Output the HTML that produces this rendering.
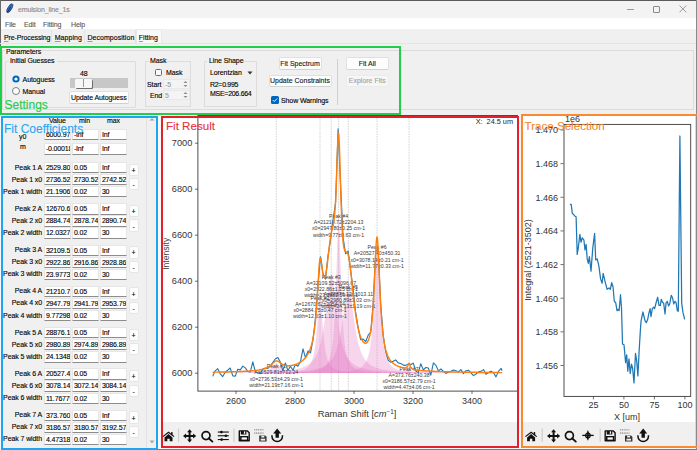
<!DOCTYPE html>
<html><head><meta charset="utf-8"><style>
html,body{margin:0;padding:0;width:697px;height:450px;overflow:hidden;background:#f0f0f0}
body{position:relative;font-family:"Liberation Sans", sans-serif}
svg text{font-family:"Liberation Sans", sans-serif}
u{text-decoration-color:#9a9a9a}
div{-webkit-text-stroke:0.12px currentColor}
</style></head><body>
<div style="position:absolute;left:0px;top:0px;width:697px;height:18px;background:#f3f3f3"></div><div style="position:absolute;left:0px;top:18px;width:697px;height:10.5px;background:#ffffff"></div><div style="position:absolute;left:0px;top:28.5px;width:697px;height:85.5px;background:#f0f0f0"></div><div style="position:absolute;left:0px;top:114px;width:697px;height:336px;background:#f0f0f0"></div><div style="position:absolute;left:0px;top:0px;width:697px;height:1px;background:#5a5a5a"></div><div style="position:absolute;left:0px;top:0px;width:1px;height:450px;background:#6a6a6a"></div><div style="position:absolute;left:0px;top:449px;width:697px;height:1px;background:#7a7a7a"></div><svg style="position:absolute;left:5px;top:3px" width="10" height="11" viewBox="0 0 10 11"><ellipse cx="4.8" cy="5.2" rx="1.9" ry="4.9" transform="rotate(30 4.8 5.2)" fill="#2f6bc0" stroke="#1a3a6e" stroke-width="0.7"/><path d="M2.2 9.8 L5.6 4" stroke="#0f2447" stroke-width="0.8"/></svg><div style="position:absolute;left:18px;top:5.8px;font-size:7px;line-height:7px;color:#8a8a8a;white-space:pre;letter-spacing:-0.1px;letter-spacing:-0.15px">emulsion_line_1s</div><div style="position:absolute;left:627px;top:8.5px;width:6.5px;height:1px;background:#9a9a9a"></div><div style="position:absolute;left:652.5px;top:5.5px;width:7px;height:7px;border:1px solid #8a8a8a;box-sizing:border-box;border-radius:1px"></div><svg style="position:absolute;left:679px;top:5.2px" width="8" height="8" viewBox="0 0 8 8"><path d="M0.5 0.5 L7.3 7.3 M7.3 0.5 L0.5 7.3" stroke="#8a8a8a" stroke-width="0.85"/></svg><div style="position:absolute;left:5px;top:20.5px;font-size:7px;line-height:7px;color:#5a5a5a;white-space:pre;letter-spacing:-0.1px;">File</div><div style="position:absolute;left:24px;top:20.5px;font-size:7px;line-height:7px;color:#5a5a5a;white-space:pre;letter-spacing:-0.1px;">Edit</div><div style="position:absolute;left:43px;top:20.5px;font-size:7px;line-height:7px;color:#5a5a5a;white-space:pre;letter-spacing:-0.1px;">Fitting</div><div style="position:absolute;left:71px;top:20.5px;font-size:7px;line-height:7px;color:#5a5a5a;white-space:pre;letter-spacing:-0.1px;">Help</div><div style="position:absolute;left:0px;top:42.5px;width:697px;height:1px;background:#e4e4e4"></div><div style="position:absolute;left:2px;top:29.5px;width:49.5px;height:13px;background:#f0f0f0;border-right:1px solid #e2e2e2;box-sizing:border-box"></div><div style="position:absolute;left:3.9px;top:34.4px;font-size:7px;line-height:7px;color:#000;white-space:pre;letter-spacing:-0.1px;letter-spacing:-0.1px"><u>P</u>re-Processing</div><div style="position:absolute;left:51.5px;top:29.5px;width:33.0px;height:13px;background:#f0f0f0;border-right:1px solid #e2e2e2;box-sizing:border-box"></div><div style="position:absolute;left:54.7px;top:34.4px;font-size:7px;line-height:7px;color:#000;white-space:pre;letter-spacing:-0.1px;letter-spacing:0.05px"><u>M</u>apping</div><div style="position:absolute;left:84.5px;top:29.5px;width:51.0px;height:13px;background:#f0f0f0;border-right:1px solid #e2e2e2;box-sizing:border-box"></div><div style="position:absolute;left:87.4px;top:34.4px;font-size:7px;line-height:7px;color:#000;white-space:pre;letter-spacing:-0.1px;letter-spacing:0.05px"><u>D</u>ecomposition</div><div style="position:absolute;left:135.5px;top:28.5px;width:26.5px;height:14.5px;background:#f9f9f9;border:1px solid #e8e8e8;border-bottom:none;box-sizing:border-box"></div><div style="position:absolute;left:138.8px;top:33.8px;font-size:7px;line-height:7px;color:#000;white-space:pre;letter-spacing:-0.1px;letter-spacing:0px"><u>F</u>itting</div><div style="position:absolute;left:2px;top:50px;width:692px;height:60px;border:1px solid #dcdcdc;box-sizing:border-box"></div><div style="position:absolute;left:5px;top:48px;width:36px;height:5px;background:#f0f0f0"></div><div style="position:absolute;left:6px;top:47.5px;font-size:7px;line-height:7px;color:#000;white-space:pre;letter-spacing:-0.1px;">Parameters</div><div style="position:absolute;left:5px;top:61px;width:131px;height:47px;border:1px solid #dcdcdc;box-sizing:border-box;border-radius:1px"></div><div style="position:absolute;left:9px;top:58px;width:48px;height:5px;background:#f0f0f0"></div><div style="position:absolute;left:10px;top:57px;font-size:7px;line-height:7px;color:#000;white-space:pre;letter-spacing:-0.1px;">Initial Guesses</div><svg style="position:absolute;left:11.3px;top:74px" width="10" height="22" viewBox="0 0 10 22"><circle cx="5" cy="5" r="3.6" fill="#0067c0"/><circle cx="5" cy="5" r="1.6" fill="#fff"/><circle cx="5" cy="17" r="3.5" fill="#fff" stroke="#5f5f5f" stroke-width="0.8"/></svg><div style="position:absolute;left:22.6px;top:75.5px;font-size:7px;line-height:7px;color:#000;white-space:pre;letter-spacing:-0.1px;">Autoguess</div><div style="position:absolute;left:22.6px;top:87.5px;font-size:7px;line-height:7px;color:#000;white-space:pre;letter-spacing:-0.1px;">Manual</div><div style="position:absolute;left:80px;top:69.5px;font-size:7px;line-height:7px;color:#000;white-space:pre;letter-spacing:-0.1px;">48</div><div style="position:absolute;left:70px;top:78px;width:58px;height:10px;background:#c7c7c7"></div><div style="position:absolute;left:75px;top:79px;width:17px;height:8.5px;background:#f7f7f7;box-shadow:1px 1px 0 #6e6e6e;border-radius:1px"></div><div style="position:absolute;left:83px;top:79px;width:1px;height:8px;background:#9a9a9a"></div><div style="position:absolute;left:69px;top:91px;width:60px;height:12.5px;background:#fdfdfd;border:1px solid #e0e0e0;box-sizing:border-box;border-radius:2px;border-bottom-color:#cfcfcf"></div><div style="position:absolute;left:71px;top:93.5px;font-size:7px;line-height:7px;color:#000;white-space:pre;letter-spacing:-0.1px;">Update Autoguess</div><div style="position:absolute;left:145px;top:61px;width:46px;height:46px;border:1px solid #dcdcdc;box-sizing:border-box"></div><div style="position:absolute;left:149px;top:58px;width:18px;height:5px;background:#f0f0f0"></div><div style="position:absolute;left:150px;top:57px;font-size:7px;line-height:7px;color:#000;white-space:pre;letter-spacing:-0.1px;">Mask</div><div style="position:absolute;left:154.5px;top:68.5px;width:7.5px;height:7.5px;border:1px solid #6a6a6a;box-sizing:border-box;border-radius:1.5px;background:#fafafa"></div><div style="position:absolute;left:166px;top:69px;font-size:7px;line-height:7px;color:#000;white-space:pre;letter-spacing:-0.1px;">Mask</div><div style="position:absolute;left:147px;top:80.5px;font-size:7px;line-height:7px;color:#000;white-space:pre;letter-spacing:-0.1px;">Start</div><div style="position:absolute;left:150px;top:91.5px;font-size:7px;line-height:7px;color:#000;white-space:pre;letter-spacing:-0.1px;">End</div><div style="position:absolute;left:163px;top:79px;width:27px;height:10px;background:#f4f4f4;border:1px solid #e8e8e8;box-sizing:border-box"></div><svg style="position:absolute;left:182px;top:80px" width="7" height="8" viewBox="0 0 7 8"><path d="M1.5 3 L3.5 1 L5.5 3 Z M1.5 5 L3.5 7 L5.5 5 Z" fill="#8a8a8a"/></svg><div style="position:absolute;left:163px;top:90px;width:27px;height:10px;background:#f4f4f4;border:1px solid #e8e8e8;box-sizing:border-box"></div><svg style="position:absolute;left:182px;top:91px" width="7" height="8" viewBox="0 0 7 8"><path d="M1.5 3 L3.5 1 L5.5 3 Z M1.5 5 L3.5 7 L5.5 5 Z" fill="#8a8a8a"/></svg><div style="position:absolute;left:165px;top:80.5px;font-size:7px;line-height:7px;color:#9a9a9a;white-space:pre;letter-spacing:-0.1px;">-5</div><div style="position:absolute;left:165px;top:91.5px;font-size:7px;line-height:7px;color:#9a9a9a;white-space:pre;letter-spacing:-0.1px;">5</div><div style="position:absolute;left:204px;top:61px;width:53px;height:46px;border:1px solid #dcdcdc;box-sizing:border-box"></div><div style="position:absolute;left:207px;top:58px;width:36px;height:5px;background:#f0f0f0"></div><div style="position:absolute;left:209px;top:57px;font-size:7px;line-height:7px;color:#000;white-space:pre;letter-spacing:-0.1px;">Line Shape</div><div style="position:absolute;left:210px;top:69px;font-size:7px;line-height:7px;color:#000;white-space:pre;letter-spacing:-0.1px;">Lorentzian</div><svg style="position:absolute;left:247px;top:71px" width="6" height="4" viewBox="0 0 6 4"><path d="M0.5 0.5 L5.5 0.5 L3 3.5 Z" fill="#333"/></svg><div style="position:absolute;left:210px;top:81px;font-size:7px;line-height:7px;color:#000;white-space:pre;letter-spacing:-0.1px;letter-spacing:-0.3px">R2=0.995</div><div style="position:absolute;left:210px;top:89.5px;font-size:7px;line-height:7px;color:#000;white-space:pre;letter-spacing:-0.1px;letter-spacing:-0.28px">MSE=206.664</div><div style="position:absolute;left:278.5px;top:56.5px;width:43px;height:13px;background:#fdfdfd;border:1px solid #e0e0e0;border-bottom-color:#d2d2d2;box-sizing:border-box;border-radius:2px"></div><div style="position:absolute;left:278.5px;top:56.5px;width:43px;height:13px;font-size:7px;line-height:13px;text-align:center;color:#1a1a1a;white-space:pre">Fit Spectrum</div><div style="position:absolute;left:268.5px;top:74.5px;width:63px;height:12.5px;background:#fdfdfd;border:1px solid #e0e0e0;border-bottom-color:#d2d2d2;box-sizing:border-box;border-radius:2px"></div><div style="position:absolute;left:268.5px;top:74.5px;width:63px;height:12.5px;font-size:7px;line-height:12.5px;text-align:center;color:#1a1a1a;white-space:pre">Update Constraints</div><div style="position:absolute;left:271px;top:96px;width:7.5px;height:7.5px;background:#0067c0;border-radius:1.5px"></div><svg style="position:absolute;left:271px;top:96px" width="8" height="8" viewBox="0 0 8 8"><path d="M1.8 4 L3.3 5.5 L6.2 2.5" stroke="#fff" stroke-width="0.9" fill="none"/></svg><div style="position:absolute;left:281px;top:96.5px;font-size:7px;line-height:7px;color:#000;white-space:pre;letter-spacing:-0.1px;">Show Warnings</div><div style="position:absolute;left:337px;top:59px;width:1px;height:46px;background:#cfcfcf"></div><div style="position:absolute;left:346px;top:56.5px;width:42.5px;height:13px;background:#fdfdfd;border:1px solid #e0e0e0;border-bottom-color:#d2d2d2;box-sizing:border-box;border-radius:2px"></div><div style="position:absolute;left:346px;top:56.5px;width:42.5px;height:13px;font-size:7px;line-height:13px;text-align:center;color:#1a1a1a;white-space:pre">Fit All</div><div style="position:absolute;left:346px;top:74.5px;width:42.5px;height:12.5px;background:#f6f6f6;border:1px solid #ececec;border-bottom-color:#ececec;box-sizing:border-box;border-radius:2px"></div><div style="position:absolute;left:346px;top:74.5px;width:42.5px;height:12.5px;font-size:7px;line-height:12.5px;text-align:center;color:#a3a3a3;white-space:pre">Explore Fits</div><div style="position:absolute;left:0px;top:115px;width:697px;height:335px;background:#f8f8f8"></div><div style="position:absolute;left:2px;top:118px;width:154px;height:331px;background:#f0f0f0"></div><div style="position:absolute;left:145.5px;top:117px;width:1px;height:333px;background:#e3e3e3"></div><svg style="position:absolute;left:147.5px;top:116.5px" width="8" height="6" viewBox="0 0 8 6"><path d="M1.5 3.6 L4 1.3 L6.5 3.6 Z" fill="#a0a0a0"/></svg><svg style="position:absolute;left:148px;top:439px" width="8" height="6" viewBox="0 0 8 6"><path d="M1.5 1.5 L4 4.5 L6.5 1.5 Z" fill="#a8a8a8"/></svg><div style="position:absolute;left:49px;top:117px;font-size:7px;line-height:7px;color:#000;white-space:pre;letter-spacing:-0.1px;">Value</div><div style="position:absolute;left:79px;top:117px;font-size:7px;line-height:7px;color:#000;white-space:pre;letter-spacing:-0.1px;">min</div><div style="position:absolute;left:107px;top:117px;font-size:7px;line-height:7px;color:#000;white-space:pre;letter-spacing:-0.1px;">max</div><div style="position:absolute;left:43.7px;top:128.7px;width:27.3px;height:11.3px;background:#fff;border:1px solid #e6e6e6;border-bottom:1px solid #8c8c8c;box-sizing:border-box;overflow:hidden;font-size:7px;line-height:10.3px;padding-left:1.2px;color:#000;white-space:pre;letter-spacing:-0.15px">6000.974</div><div style="position:absolute;left:71.7px;top:128.7px;width:27.3px;height:11.3px;background:#fff;border:1px solid #e6e6e6;border-bottom:1px solid #8c8c8c;box-sizing:border-box;overflow:hidden;font-size:7px;line-height:10.3px;padding-left:1.2px;color:#000;white-space:pre;letter-spacing:-0.15px">-Inf</div><div style="position:absolute;left:99.7px;top:128.7px;width:27.3px;height:11.3px;background:#fff;border:1px solid #e6e6e6;border-bottom:1px solid #8c8c8c;box-sizing:border-box;overflow:hidden;font-size:7px;line-height:10.3px;padding-left:1.2px;color:#000;white-space:pre;letter-spacing:-0.15px">Inf</div><div style="position:absolute;left:19px;top:133px;font-size:7px;line-height:7px;color:#000;white-space:pre;letter-spacing:-0.1px;">y0</div><div style="position:absolute;left:43.7px;top:143.3px;width:27.3px;height:11.3px;background:#fff;border:1px solid #e6e6e6;border-bottom:1px solid #8c8c8c;box-sizing:border-box;overflow:hidden;font-size:7px;line-height:10.3px;padding-left:1.2px;color:#000;white-space:pre;letter-spacing:-0.15px">-0.00018</div><div style="position:absolute;left:71.7px;top:143.3px;width:27.3px;height:11.3px;background:#fff;border:1px solid #e6e6e6;border-bottom:1px solid #8c8c8c;box-sizing:border-box;overflow:hidden;font-size:7px;line-height:10.3px;padding-left:1.2px;color:#000;white-space:pre;letter-spacing:-0.15px">-Inf</div><div style="position:absolute;left:99.7px;top:143.3px;width:27.3px;height:11.3px;background:#fff;border:1px solid #e6e6e6;border-bottom:1px solid #8c8c8c;box-sizing:border-box;overflow:hidden;font-size:7px;line-height:10.3px;padding-left:1.2px;color:#000;white-space:pre;letter-spacing:-0.15px">Inf</div><div style="position:absolute;left:20px;top:142.8px;font-size:7px;line-height:7px;color:#000;white-space:pre;letter-spacing:-0.1px;">m</div><div style="position:absolute;left:43.7px;top:162.0px;width:27.3px;height:11.3px;background:#fff;border:1px solid #e6e6e6;border-bottom:1px solid #8c8c8c;box-sizing:border-box;overflow:hidden;font-size:7px;line-height:10.3px;padding-left:1.2px;color:#000;white-space:pre;letter-spacing:-0.15px">2529.807</div><div style="position:absolute;left:71.7px;top:162.0px;width:27.3px;height:11.3px;background:#fff;border:1px solid #e6e6e6;border-bottom:1px solid #8c8c8c;box-sizing:border-box;overflow:hidden;font-size:7px;line-height:10.3px;padding-left:1.2px;color:#000;white-space:pre;letter-spacing:-0.15px">0.05</div><div style="position:absolute;left:99.7px;top:162.0px;width:27.3px;height:11.3px;background:#fff;border:1px solid #e6e6e6;border-bottom:1px solid #8c8c8c;box-sizing:border-box;overflow:hidden;font-size:7px;line-height:10.3px;padding-left:1.2px;color:#000;white-space:pre;letter-spacing:-0.15px">Inf</div><div style="position:absolute;left:0px;top:163.5px;width:42px;text-align:right;font-size:7px;line-height:7px;color:#000;letter-spacing:-0.1px;white-space:pre">Peak 1 A</div><div style="position:absolute;left:43.7px;top:174.1px;width:27.3px;height:11.3px;background:#fff;border:1px solid #e6e6e6;border-bottom:1px solid #8c8c8c;box-sizing:border-box;overflow:hidden;font-size:7px;line-height:10.3px;padding-left:1.2px;color:#000;white-space:pre;letter-spacing:-0.15px">2736.529</div><div style="position:absolute;left:71.7px;top:174.1px;width:27.3px;height:11.3px;background:#fff;border:1px solid #e6e6e6;border-bottom:1px solid #8c8c8c;box-sizing:border-box;overflow:hidden;font-size:7px;line-height:10.3px;padding-left:1.2px;color:#000;white-space:pre;letter-spacing:-0.15px">2730.529</div><div style="position:absolute;left:99.7px;top:174.1px;width:27.3px;height:11.3px;background:#fff;border:1px solid #e6e6e6;border-bottom:1px solid #8c8c8c;box-sizing:border-box;overflow:hidden;font-size:7px;line-height:10.3px;padding-left:1.2px;color:#000;white-space:pre;letter-spacing:-0.15px">2742.529</div><div style="position:absolute;left:0px;top:175.6px;width:42px;text-align:right;font-size:7px;line-height:7px;color:#000;letter-spacing:-0.1px;white-space:pre">Peak 1 x0</div><div style="position:absolute;left:43.7px;top:186.2px;width:27.3px;height:11.3px;background:#fff;border:1px solid #e6e6e6;border-bottom:1px solid #8c8c8c;box-sizing:border-box;overflow:hidden;font-size:7px;line-height:10.3px;padding-left:1.2px;color:#000;white-space:pre;letter-spacing:-0.15px">21.19065</div><div style="position:absolute;left:71.7px;top:186.2px;width:27.3px;height:11.3px;background:#fff;border:1px solid #e6e6e6;border-bottom:1px solid #8c8c8c;box-sizing:border-box;overflow:hidden;font-size:7px;line-height:10.3px;padding-left:1.2px;color:#000;white-space:pre;letter-spacing:-0.15px">0.02</div><div style="position:absolute;left:99.7px;top:186.2px;width:27.3px;height:11.3px;background:#fff;border:1px solid #e6e6e6;border-bottom:1px solid #8c8c8c;box-sizing:border-box;overflow:hidden;font-size:7px;line-height:10.3px;padding-left:1.2px;color:#000;white-space:pre;letter-spacing:-0.15px">30</div><div style="position:absolute;left:0px;top:187.7px;width:42px;text-align:right;font-size:7px;line-height:7px;color:#000;letter-spacing:-0.1px;white-space:pre">Peak 1 width</div><div style="position:absolute;left:128.8px;top:163.6px;width:10.2px;height:12.4px;background:#fdfdfd;border:1px solid #e6e6e6;box-sizing:border-box;border-radius:2px"></div><div style="position:absolute;left:131.5px;top:166.9px;font-size:7px;line-height:7px;color:#000;white-space:pre;letter-spacing:-0.1px;">+</div><div style="position:absolute;left:128.8px;top:178.2px;width:10.2px;height:12.2px;background:#fdfdfd;border:1px solid #e6e6e6;box-sizing:border-box;border-radius:2px"></div><div style="position:absolute;left:132.5px;top:181.3px;font-size:7px;line-height:7px;color:#000;white-space:pre;letter-spacing:-0.1px;">-</div><div style="position:absolute;left:43.7px;top:203.27px;width:27.3px;height:11.3px;background:#fff;border:1px solid #e6e6e6;border-bottom:1px solid #8c8c8c;box-sizing:border-box;overflow:hidden;font-size:7px;line-height:10.3px;padding-left:1.2px;color:#000;white-space:pre;letter-spacing:-0.15px">12670.61</div><div style="position:absolute;left:71.7px;top:203.27px;width:27.3px;height:11.3px;background:#fff;border:1px solid #e6e6e6;border-bottom:1px solid #8c8c8c;box-sizing:border-box;overflow:hidden;font-size:7px;line-height:10.3px;padding-left:1.2px;color:#000;white-space:pre;letter-spacing:-0.15px">0.05</div><div style="position:absolute;left:99.7px;top:203.27px;width:27.3px;height:11.3px;background:#fff;border:1px solid #e6e6e6;border-bottom:1px solid #8c8c8c;box-sizing:border-box;overflow:hidden;font-size:7px;line-height:10.3px;padding-left:1.2px;color:#000;white-space:pre;letter-spacing:-0.15px">Inf</div><div style="position:absolute;left:0px;top:204.77px;width:42px;text-align:right;font-size:7px;line-height:7px;color:#000;letter-spacing:-0.1px;white-space:pre">Peak 2 A</div><div style="position:absolute;left:43.7px;top:215.37px;width:27.3px;height:11.3px;background:#fff;border:1px solid #e6e6e6;border-bottom:1px solid #8c8c8c;box-sizing:border-box;overflow:hidden;font-size:7px;line-height:10.3px;padding-left:1.2px;color:#000;white-space:pre;letter-spacing:-0.15px">2884.745</div><div style="position:absolute;left:71.7px;top:215.37px;width:27.3px;height:11.3px;background:#fff;border:1px solid #e6e6e6;border-bottom:1px solid #8c8c8c;box-sizing:border-box;overflow:hidden;font-size:7px;line-height:10.3px;padding-left:1.2px;color:#000;white-space:pre;letter-spacing:-0.15px">2878.745</div><div style="position:absolute;left:99.7px;top:215.37px;width:27.3px;height:11.3px;background:#fff;border:1px solid #e6e6e6;border-bottom:1px solid #8c8c8c;box-sizing:border-box;overflow:hidden;font-size:7px;line-height:10.3px;padding-left:1.2px;color:#000;white-space:pre;letter-spacing:-0.15px">2890.745</div><div style="position:absolute;left:0px;top:216.87px;width:42px;text-align:right;font-size:7px;line-height:7px;color:#000;letter-spacing:-0.1px;white-space:pre">Peak 2 x0</div><div style="position:absolute;left:43.7px;top:227.47px;width:27.3px;height:11.3px;background:#fff;border:1px solid #e6e6e6;border-bottom:1px solid #8c8c8c;box-sizing:border-box;overflow:hidden;font-size:7px;line-height:10.3px;padding-left:1.2px;color:#000;white-space:pre;letter-spacing:-0.15px">12.03274</div><div style="position:absolute;left:71.7px;top:227.47px;width:27.3px;height:11.3px;background:#fff;border:1px solid #e6e6e6;border-bottom:1px solid #8c8c8c;box-sizing:border-box;overflow:hidden;font-size:7px;line-height:10.3px;padding-left:1.2px;color:#000;white-space:pre;letter-spacing:-0.15px">0.02</div><div style="position:absolute;left:99.7px;top:227.47px;width:27.3px;height:11.3px;background:#fff;border:1px solid #e6e6e6;border-bottom:1px solid #8c8c8c;box-sizing:border-box;overflow:hidden;font-size:7px;line-height:10.3px;padding-left:1.2px;color:#000;white-space:pre;letter-spacing:-0.15px">30</div><div style="position:absolute;left:0px;top:228.97px;width:42px;text-align:right;font-size:7px;line-height:7px;color:#000;letter-spacing:-0.1px;white-space:pre">Peak 2 width</div><div style="position:absolute;left:128.8px;top:204.87px;width:10.2px;height:12.4px;background:#fdfdfd;border:1px solid #e6e6e6;box-sizing:border-box;border-radius:2px"></div><div style="position:absolute;left:131.5px;top:208.17000000000002px;font-size:7px;line-height:7px;color:#000;white-space:pre;letter-spacing:-0.1px;">+</div><div style="position:absolute;left:128.8px;top:219.47px;width:10.2px;height:12.2px;background:#fdfdfd;border:1px solid #e6e6e6;box-sizing:border-box;border-radius:2px"></div><div style="position:absolute;left:132.5px;top:222.57000000000002px;font-size:7px;line-height:7px;color:#000;white-space:pre;letter-spacing:-0.1px;">-</div><div style="position:absolute;left:43.7px;top:244.54000000000002px;width:27.3px;height:11.3px;background:#fff;border:1px solid #e6e6e6;border-bottom:1px solid #8c8c8c;box-sizing:border-box;overflow:hidden;font-size:7px;line-height:10.3px;padding-left:1.2px;color:#000;white-space:pre;letter-spacing:-0.15px">32109.52</div><div style="position:absolute;left:71.7px;top:244.54000000000002px;width:27.3px;height:11.3px;background:#fff;border:1px solid #e6e6e6;border-bottom:1px solid #8c8c8c;box-sizing:border-box;overflow:hidden;font-size:7px;line-height:10.3px;padding-left:1.2px;color:#000;white-space:pre;letter-spacing:-0.15px">0.05</div><div style="position:absolute;left:99.7px;top:244.54000000000002px;width:27.3px;height:11.3px;background:#fff;border:1px solid #e6e6e6;border-bottom:1px solid #8c8c8c;box-sizing:border-box;overflow:hidden;font-size:7px;line-height:10.3px;padding-left:1.2px;color:#000;white-space:pre;letter-spacing:-0.15px">Inf</div><div style="position:absolute;left:0px;top:246.04000000000002px;width:42px;text-align:right;font-size:7px;line-height:7px;color:#000;letter-spacing:-0.1px;white-space:pre">Peak 3 A</div><div style="position:absolute;left:43.7px;top:256.64000000000004px;width:27.3px;height:11.3px;background:#fff;border:1px solid #e6e6e6;border-bottom:1px solid #8c8c8c;box-sizing:border-box;overflow:hidden;font-size:7px;line-height:10.3px;padding-left:1.2px;color:#000;white-space:pre;letter-spacing:-0.15px">2922.861</div><div style="position:absolute;left:71.7px;top:256.64000000000004px;width:27.3px;height:11.3px;background:#fff;border:1px solid #e6e6e6;border-bottom:1px solid #8c8c8c;box-sizing:border-box;overflow:hidden;font-size:7px;line-height:10.3px;padding-left:1.2px;color:#000;white-space:pre;letter-spacing:-0.15px">2916.861</div><div style="position:absolute;left:99.7px;top:256.64000000000004px;width:27.3px;height:11.3px;background:#fff;border:1px solid #e6e6e6;border-bottom:1px solid #8c8c8c;box-sizing:border-box;overflow:hidden;font-size:7px;line-height:10.3px;padding-left:1.2px;color:#000;white-space:pre;letter-spacing:-0.15px">2928.861</div><div style="position:absolute;left:0px;top:258.14000000000004px;width:42px;text-align:right;font-size:7px;line-height:7px;color:#000;letter-spacing:-0.1px;white-space:pre">Peak 3 x0</div><div style="position:absolute;left:43.7px;top:268.74px;width:27.3px;height:11.3px;background:#fff;border:1px solid #e6e6e6;border-bottom:1px solid #8c8c8c;box-sizing:border-box;overflow:hidden;font-size:7px;line-height:10.3px;padding-left:1.2px;color:#000;white-space:pre;letter-spacing:-0.15px">23.97738</div><div style="position:absolute;left:71.7px;top:268.74px;width:27.3px;height:11.3px;background:#fff;border:1px solid #e6e6e6;border-bottom:1px solid #8c8c8c;box-sizing:border-box;overflow:hidden;font-size:7px;line-height:10.3px;padding-left:1.2px;color:#000;white-space:pre;letter-spacing:-0.15px">0.02</div><div style="position:absolute;left:99.7px;top:268.74px;width:27.3px;height:11.3px;background:#fff;border:1px solid #e6e6e6;border-bottom:1px solid #8c8c8c;box-sizing:border-box;overflow:hidden;font-size:7px;line-height:10.3px;padding-left:1.2px;color:#000;white-space:pre;letter-spacing:-0.15px">30</div><div style="position:absolute;left:0px;top:270.24px;width:42px;text-align:right;font-size:7px;line-height:7px;color:#000;letter-spacing:-0.1px;white-space:pre">Peak 3 width</div><div style="position:absolute;left:128.8px;top:246.14000000000001px;width:10.2px;height:12.4px;background:#fdfdfd;border:1px solid #e6e6e6;box-sizing:border-box;border-radius:2px"></div><div style="position:absolute;left:131.5px;top:249.44000000000003px;font-size:7px;line-height:7px;color:#000;white-space:pre;letter-spacing:-0.1px;">+</div><div style="position:absolute;left:128.8px;top:260.74px;width:10.2px;height:12.2px;background:#fdfdfd;border:1px solid #e6e6e6;box-sizing:border-box;border-radius:2px"></div><div style="position:absolute;left:132.5px;top:263.84000000000003px;font-size:7px;line-height:7px;color:#000;white-space:pre;letter-spacing:-0.1px;">-</div><div style="position:absolute;left:43.7px;top:285.81px;width:27.3px;height:11.3px;background:#fff;border:1px solid #e6e6e6;border-bottom:1px solid #8c8c8c;box-sizing:border-box;overflow:hidden;font-size:7px;line-height:10.3px;padding-left:1.2px;color:#000;white-space:pre;letter-spacing:-0.15px">21210.72</div><div style="position:absolute;left:71.7px;top:285.81px;width:27.3px;height:11.3px;background:#fff;border:1px solid #e6e6e6;border-bottom:1px solid #8c8c8c;box-sizing:border-box;overflow:hidden;font-size:7px;line-height:10.3px;padding-left:1.2px;color:#000;white-space:pre;letter-spacing:-0.15px">0.05</div><div style="position:absolute;left:99.7px;top:285.81px;width:27.3px;height:11.3px;background:#fff;border:1px solid #e6e6e6;border-bottom:1px solid #8c8c8c;box-sizing:border-box;overflow:hidden;font-size:7px;line-height:10.3px;padding-left:1.2px;color:#000;white-space:pre;letter-spacing:-0.15px">Inf</div><div style="position:absolute;left:0px;top:287.31px;width:42px;text-align:right;font-size:7px;line-height:7px;color:#000;letter-spacing:-0.1px;white-space:pre">Peak 4 A</div><div style="position:absolute;left:43.7px;top:297.91px;width:27.3px;height:11.3px;background:#fff;border:1px solid #e6e6e6;border-bottom:1px solid #8c8c8c;box-sizing:border-box;overflow:hidden;font-size:7px;line-height:10.3px;padding-left:1.2px;color:#000;white-space:pre;letter-spacing:-0.15px">2947.798</div><div style="position:absolute;left:71.7px;top:297.91px;width:27.3px;height:11.3px;background:#fff;border:1px solid #e6e6e6;border-bottom:1px solid #8c8c8c;box-sizing:border-box;overflow:hidden;font-size:7px;line-height:10.3px;padding-left:1.2px;color:#000;white-space:pre;letter-spacing:-0.15px">2941.798</div><div style="position:absolute;left:99.7px;top:297.91px;width:27.3px;height:11.3px;background:#fff;border:1px solid #e6e6e6;border-bottom:1px solid #8c8c8c;box-sizing:border-box;overflow:hidden;font-size:7px;line-height:10.3px;padding-left:1.2px;color:#000;white-space:pre;letter-spacing:-0.15px">2953.798</div><div style="position:absolute;left:0px;top:299.41px;width:42px;text-align:right;font-size:7px;line-height:7px;color:#000;letter-spacing:-0.1px;white-space:pre">Peak 4 x0</div><div style="position:absolute;left:43.7px;top:310.01px;width:27.3px;height:11.3px;background:#fff;border:1px solid #e6e6e6;border-bottom:1px solid #8c8c8c;box-sizing:border-box;overflow:hidden;font-size:7px;line-height:10.3px;padding-left:1.2px;color:#000;white-space:pre;letter-spacing:-0.15px">9.772988</div><div style="position:absolute;left:71.7px;top:310.01px;width:27.3px;height:11.3px;background:#fff;border:1px solid #e6e6e6;border-bottom:1px solid #8c8c8c;box-sizing:border-box;overflow:hidden;font-size:7px;line-height:10.3px;padding-left:1.2px;color:#000;white-space:pre;letter-spacing:-0.15px">0.02</div><div style="position:absolute;left:99.7px;top:310.01px;width:27.3px;height:11.3px;background:#fff;border:1px solid #e6e6e6;border-bottom:1px solid #8c8c8c;box-sizing:border-box;overflow:hidden;font-size:7px;line-height:10.3px;padding-left:1.2px;color:#000;white-space:pre;letter-spacing:-0.15px">30</div><div style="position:absolute;left:0px;top:311.51px;width:42px;text-align:right;font-size:7px;line-height:7px;color:#000;letter-spacing:-0.1px;white-space:pre">Peak 4 width</div><div style="position:absolute;left:128.8px;top:287.41px;width:10.2px;height:12.4px;background:#fdfdfd;border:1px solid #e6e6e6;box-sizing:border-box;border-radius:2px"></div><div style="position:absolute;left:131.5px;top:290.71px;font-size:7px;line-height:7px;color:#000;white-space:pre;letter-spacing:-0.1px;">+</div><div style="position:absolute;left:128.8px;top:302.01px;width:10.2px;height:12.2px;background:#fdfdfd;border:1px solid #e6e6e6;box-sizing:border-box;border-radius:2px"></div><div style="position:absolute;left:132.5px;top:305.11px;font-size:7px;line-height:7px;color:#000;white-space:pre;letter-spacing:-0.1px;">-</div><div style="position:absolute;left:43.7px;top:327.08000000000004px;width:27.3px;height:11.3px;background:#fff;border:1px solid #e6e6e6;border-bottom:1px solid #8c8c8c;box-sizing:border-box;overflow:hidden;font-size:7px;line-height:10.3px;padding-left:1.2px;color:#000;white-space:pre;letter-spacing:-0.15px">28876.11</div><div style="position:absolute;left:71.7px;top:327.08000000000004px;width:27.3px;height:11.3px;background:#fff;border:1px solid #e6e6e6;border-bottom:1px solid #8c8c8c;box-sizing:border-box;overflow:hidden;font-size:7px;line-height:10.3px;padding-left:1.2px;color:#000;white-space:pre;letter-spacing:-0.15px">0.05</div><div style="position:absolute;left:99.7px;top:327.08000000000004px;width:27.3px;height:11.3px;background:#fff;border:1px solid #e6e6e6;border-bottom:1px solid #8c8c8c;box-sizing:border-box;overflow:hidden;font-size:7px;line-height:10.3px;padding-left:1.2px;color:#000;white-space:pre;letter-spacing:-0.15px">Inf</div><div style="position:absolute;left:0px;top:328.58000000000004px;width:42px;text-align:right;font-size:7px;line-height:7px;color:#000;letter-spacing:-0.1px;white-space:pre">Peak 5 A</div><div style="position:absolute;left:43.7px;top:339.18000000000006px;width:27.3px;height:11.3px;background:#fff;border:1px solid #e6e6e6;border-bottom:1px solid #8c8c8c;box-sizing:border-box;overflow:hidden;font-size:7px;line-height:10.3px;padding-left:1.2px;color:#000;white-space:pre;letter-spacing:-0.15px">2980.891</div><div style="position:absolute;left:71.7px;top:339.18000000000006px;width:27.3px;height:11.3px;background:#fff;border:1px solid #e6e6e6;border-bottom:1px solid #8c8c8c;box-sizing:border-box;overflow:hidden;font-size:7px;line-height:10.3px;padding-left:1.2px;color:#000;white-space:pre;letter-spacing:-0.15px">2974.891</div><div style="position:absolute;left:99.7px;top:339.18000000000006px;width:27.3px;height:11.3px;background:#fff;border:1px solid #e6e6e6;border-bottom:1px solid #8c8c8c;box-sizing:border-box;overflow:hidden;font-size:7px;line-height:10.3px;padding-left:1.2px;color:#000;white-space:pre;letter-spacing:-0.15px">2986.891</div><div style="position:absolute;left:0px;top:340.68000000000006px;width:42px;text-align:right;font-size:7px;line-height:7px;color:#000;letter-spacing:-0.1px;white-space:pre">Peak 5 x0</div><div style="position:absolute;left:43.7px;top:351.28000000000003px;width:27.3px;height:11.3px;background:#fff;border:1px solid #e6e6e6;border-bottom:1px solid #8c8c8c;box-sizing:border-box;overflow:hidden;font-size:7px;line-height:10.3px;padding-left:1.2px;color:#000;white-space:pre;letter-spacing:-0.15px">24.13481</div><div style="position:absolute;left:71.7px;top:351.28000000000003px;width:27.3px;height:11.3px;background:#fff;border:1px solid #e6e6e6;border-bottom:1px solid #8c8c8c;box-sizing:border-box;overflow:hidden;font-size:7px;line-height:10.3px;padding-left:1.2px;color:#000;white-space:pre;letter-spacing:-0.15px">0.02</div><div style="position:absolute;left:99.7px;top:351.28000000000003px;width:27.3px;height:11.3px;background:#fff;border:1px solid #e6e6e6;border-bottom:1px solid #8c8c8c;box-sizing:border-box;overflow:hidden;font-size:7px;line-height:10.3px;padding-left:1.2px;color:#000;white-space:pre;letter-spacing:-0.15px">30</div><div style="position:absolute;left:0px;top:352.78000000000003px;width:42px;text-align:right;font-size:7px;line-height:7px;color:#000;letter-spacing:-0.1px;white-space:pre">Peak 5 width</div><div style="position:absolute;left:128.8px;top:328.68000000000006px;width:10.2px;height:12.4px;background:#fdfdfd;border:1px solid #e6e6e6;box-sizing:border-box;border-radius:2px"></div><div style="position:absolute;left:131.5px;top:331.98px;font-size:7px;line-height:7px;color:#000;white-space:pre;letter-spacing:-0.1px;">+</div><div style="position:absolute;left:128.8px;top:343.28000000000003px;width:10.2px;height:12.2px;background:#fdfdfd;border:1px solid #e6e6e6;box-sizing:border-box;border-radius:2px"></div><div style="position:absolute;left:132.5px;top:346.38000000000005px;font-size:7px;line-height:7px;color:#000;white-space:pre;letter-spacing:-0.1px;">-</div><div style="position:absolute;left:43.7px;top:368.35px;width:27.3px;height:11.3px;background:#fff;border:1px solid #e6e6e6;border-bottom:1px solid #8c8c8c;box-sizing:border-box;overflow:hidden;font-size:7px;line-height:10.3px;padding-left:1.2px;color:#000;white-space:pre;letter-spacing:-0.15px">20527.40</div><div style="position:absolute;left:71.7px;top:368.35px;width:27.3px;height:11.3px;background:#fff;border:1px solid #e6e6e6;border-bottom:1px solid #8c8c8c;box-sizing:border-box;overflow:hidden;font-size:7px;line-height:10.3px;padding-left:1.2px;color:#000;white-space:pre;letter-spacing:-0.15px">0.05</div><div style="position:absolute;left:99.7px;top:368.35px;width:27.3px;height:11.3px;background:#fff;border:1px solid #e6e6e6;border-bottom:1px solid #8c8c8c;box-sizing:border-box;overflow:hidden;font-size:7px;line-height:10.3px;padding-left:1.2px;color:#000;white-space:pre;letter-spacing:-0.15px">Inf</div><div style="position:absolute;left:0px;top:369.85px;width:42px;text-align:right;font-size:7px;line-height:7px;color:#000;letter-spacing:-0.1px;white-space:pre">Peak 6 A</div><div style="position:absolute;left:43.7px;top:380.45000000000005px;width:27.3px;height:11.3px;background:#fff;border:1px solid #e6e6e6;border-bottom:1px solid #8c8c8c;box-sizing:border-box;overflow:hidden;font-size:7px;line-height:10.3px;padding-left:1.2px;color:#000;white-space:pre;letter-spacing:-0.15px">3078.141</div><div style="position:absolute;left:71.7px;top:380.45000000000005px;width:27.3px;height:11.3px;background:#fff;border:1px solid #e6e6e6;border-bottom:1px solid #8c8c8c;box-sizing:border-box;overflow:hidden;font-size:7px;line-height:10.3px;padding-left:1.2px;color:#000;white-space:pre;letter-spacing:-0.15px">3072.141</div><div style="position:absolute;left:99.7px;top:380.45000000000005px;width:27.3px;height:11.3px;background:#fff;border:1px solid #e6e6e6;border-bottom:1px solid #8c8c8c;box-sizing:border-box;overflow:hidden;font-size:7px;line-height:10.3px;padding-left:1.2px;color:#000;white-space:pre;letter-spacing:-0.15px">3084.141</div><div style="position:absolute;left:0px;top:381.95000000000005px;width:42px;text-align:right;font-size:7px;line-height:7px;color:#000;letter-spacing:-0.1px;white-space:pre">Peak 6 x0</div><div style="position:absolute;left:43.7px;top:392.55px;width:27.3px;height:11.3px;background:#fff;border:1px solid #e6e6e6;border-bottom:1px solid #8c8c8c;box-sizing:border-box;overflow:hidden;font-size:7px;line-height:10.3px;padding-left:1.2px;color:#000;white-space:pre;letter-spacing:-0.15px">11.76779</div><div style="position:absolute;left:71.7px;top:392.55px;width:27.3px;height:11.3px;background:#fff;border:1px solid #e6e6e6;border-bottom:1px solid #8c8c8c;box-sizing:border-box;overflow:hidden;font-size:7px;line-height:10.3px;padding-left:1.2px;color:#000;white-space:pre;letter-spacing:-0.15px">0.02</div><div style="position:absolute;left:99.7px;top:392.55px;width:27.3px;height:11.3px;background:#fff;border:1px solid #e6e6e6;border-bottom:1px solid #8c8c8c;box-sizing:border-box;overflow:hidden;font-size:7px;line-height:10.3px;padding-left:1.2px;color:#000;white-space:pre;letter-spacing:-0.15px">30</div><div style="position:absolute;left:0px;top:394.05px;width:42px;text-align:right;font-size:7px;line-height:7px;color:#000;letter-spacing:-0.1px;white-space:pre">Peak 6 width</div><div style="position:absolute;left:128.8px;top:369.95000000000005px;width:10.2px;height:12.4px;background:#fdfdfd;border:1px solid #e6e6e6;box-sizing:border-box;border-radius:2px"></div><div style="position:absolute;left:131.5px;top:373.25px;font-size:7px;line-height:7px;color:#000;white-space:pre;letter-spacing:-0.1px;">+</div><div style="position:absolute;left:128.8px;top:384.55px;width:10.2px;height:12.2px;background:#fdfdfd;border:1px solid #e6e6e6;box-sizing:border-box;border-radius:2px"></div><div style="position:absolute;left:132.5px;top:387.65000000000003px;font-size:7px;line-height:7px;color:#000;white-space:pre;letter-spacing:-0.1px;">-</div><div style="position:absolute;left:43.7px;top:409.62px;width:27.3px;height:11.3px;background:#fff;border:1px solid #e6e6e6;border-bottom:1px solid #8c8c8c;box-sizing:border-box;overflow:hidden;font-size:7px;line-height:10.3px;padding-left:1.2px;color:#000;white-space:pre;letter-spacing:-0.15px">373.7601</div><div style="position:absolute;left:71.7px;top:409.62px;width:27.3px;height:11.3px;background:#fff;border:1px solid #e6e6e6;border-bottom:1px solid #8c8c8c;box-sizing:border-box;overflow:hidden;font-size:7px;line-height:10.3px;padding-left:1.2px;color:#000;white-space:pre;letter-spacing:-0.15px">0.05</div><div style="position:absolute;left:99.7px;top:409.62px;width:27.3px;height:11.3px;background:#fff;border:1px solid #e6e6e6;border-bottom:1px solid #8c8c8c;box-sizing:border-box;overflow:hidden;font-size:7px;line-height:10.3px;padding-left:1.2px;color:#000;white-space:pre;letter-spacing:-0.15px">Inf</div><div style="position:absolute;left:0px;top:411.12px;width:42px;text-align:right;font-size:7px;line-height:7px;color:#000;letter-spacing:-0.1px;white-space:pre">Peak 7 A</div><div style="position:absolute;left:43.7px;top:421.72px;width:27.3px;height:11.3px;background:#fff;border:1px solid #e6e6e6;border-bottom:1px solid #8c8c8c;box-sizing:border-box;overflow:hidden;font-size:7px;line-height:10.3px;padding-left:1.2px;color:#000;white-space:pre;letter-spacing:-0.15px">3186.572</div><div style="position:absolute;left:71.7px;top:421.72px;width:27.3px;height:11.3px;background:#fff;border:1px solid #e6e6e6;border-bottom:1px solid #8c8c8c;box-sizing:border-box;overflow:hidden;font-size:7px;line-height:10.3px;padding-left:1.2px;color:#000;white-space:pre;letter-spacing:-0.15px">3180.572</div><div style="position:absolute;left:99.7px;top:421.72px;width:27.3px;height:11.3px;background:#fff;border:1px solid #e6e6e6;border-bottom:1px solid #8c8c8c;box-sizing:border-box;overflow:hidden;font-size:7px;line-height:10.3px;padding-left:1.2px;color:#000;white-space:pre;letter-spacing:-0.15px">3192.572</div><div style="position:absolute;left:0px;top:423.22px;width:42px;text-align:right;font-size:7px;line-height:7px;color:#000;letter-spacing:-0.1px;white-space:pre">Peak 7 x0</div><div style="position:absolute;left:43.7px;top:433.82px;width:27.3px;height:11.3px;background:#fff;border:1px solid #e6e6e6;border-bottom:1px solid #8c8c8c;box-sizing:border-box;overflow:hidden;font-size:7px;line-height:10.3px;padding-left:1.2px;color:#000;white-space:pre;letter-spacing:-0.15px">4.473181</div><div style="position:absolute;left:71.7px;top:433.82px;width:27.3px;height:11.3px;background:#fff;border:1px solid #e6e6e6;border-bottom:1px solid #8c8c8c;box-sizing:border-box;overflow:hidden;font-size:7px;line-height:10.3px;padding-left:1.2px;color:#000;white-space:pre;letter-spacing:-0.15px">0.02</div><div style="position:absolute;left:99.7px;top:433.82px;width:27.3px;height:11.3px;background:#fff;border:1px solid #e6e6e6;border-bottom:1px solid #8c8c8c;box-sizing:border-box;overflow:hidden;font-size:7px;line-height:10.3px;padding-left:1.2px;color:#000;white-space:pre;letter-spacing:-0.15px">30</div><div style="position:absolute;left:0px;top:435.32px;width:42px;text-align:right;font-size:7px;line-height:7px;color:#000;letter-spacing:-0.1px;white-space:pre">Peak 7 width</div><div style="position:absolute;left:128.8px;top:411.22px;width:10.2px;height:12.4px;background:#fdfdfd;border:1px solid #e6e6e6;box-sizing:border-box;border-radius:2px"></div><div style="position:absolute;left:131.5px;top:414.52px;font-size:7px;line-height:7px;color:#000;white-space:pre;letter-spacing:-0.1px;">+</div><div style="position:absolute;left:128.8px;top:425.82px;width:10.2px;height:12.2px;background:#fdfdfd;border:1px solid #e6e6e6;box-sizing:border-box;border-radius:2px"></div><div style="position:absolute;left:132.5px;top:428.92px;font-size:7px;line-height:7px;color:#000;white-space:pre;letter-spacing:-0.1px;">-</div><div style="position:absolute;left:163px;top:118px;width:354px;height:304px;background:#ffffff"></div><div style="position:absolute;left:163px;top:422px;width:354px;height:24px;background:#f0f0f0"></div><svg style="position:absolute;left:0;top:0" width="697" height="450" viewBox="0 0 697 450"><defs><clipPath id="ax"><rect x="198" y="115.3" width="319" height="275.7"/></clipPath></defs><g clip-path="url(#ax)"><line x1="276.28" y1="115.3" x2="276.28" y2="391" stroke="#b8b8b8" stroke-width="0.6" stroke-dasharray="1.6 1"/><line x1="320.00" y1="115.3" x2="320.00" y2="391" stroke="#b8b8b8" stroke-width="0.6" stroke-dasharray="1.6 1"/><line x1="331.24" y1="115.3" x2="331.24" y2="391" stroke="#b8b8b8" stroke-width="0.6" stroke-dasharray="1.6 1"/><line x1="338.60" y1="115.3" x2="338.60" y2="391" stroke="#b8b8b8" stroke-width="0.6" stroke-dasharray="1.6 1"/><line x1="348.36" y1="115.3" x2="348.36" y2="391" stroke="#b8b8b8" stroke-width="0.6" stroke-dasharray="1.6 1"/><line x1="377.05" y1="115.3" x2="377.05" y2="391" stroke="#b8b8b8" stroke-width="0.6" stroke-dasharray="1.6 1"/><line x1="409.04" y1="115.3" x2="409.04" y2="391" stroke="#b8b8b8" stroke-width="0.6" stroke-dasharray="1.6 1"/><polygon points="212.7,373.0 213.3,373.0 213.9,373.0 214.5,373.0 215.1,373.0 215.6,373.0 216.2,373.0 216.8,373.0 217.4,373.0 218.0,373.0 218.6,373.0 219.2,373.0 219.8,373.0 220.4,373.0 221.0,373.0 221.5,373.0 222.1,373.0 222.7,373.0 223.3,373.0 223.9,373.0 224.5,373.0 225.1,373.0 225.7,373.0 226.3,372.9 226.9,372.9 227.4,372.9 228.0,372.9 228.6,372.9 229.2,372.9 229.8,372.9 230.4,372.9 231.0,372.9 231.6,372.9 232.2,372.9 232.8,372.9 233.3,372.9 233.9,372.9 234.5,372.9 235.1,372.9 235.7,372.9 236.3,372.9 236.9,372.9 237.5,372.9 238.1,372.9 238.7,372.8 239.2,372.8 239.8,372.8 240.4,372.8 241.0,372.8 241.6,372.8 242.2,372.8 242.8,372.8 243.4,372.8 244.0,372.8 244.6,372.8 245.1,372.7 245.7,372.7 246.3,372.7 246.9,372.7 247.5,372.7 248.1,372.7 248.7,372.7 249.3,372.6 249.9,372.6 250.5,372.6 251.0,372.6 251.6,372.6 252.2,372.5 252.8,372.5 253.4,372.5 254.0,372.4 254.6,372.4 255.2,372.4 255.8,372.3 256.4,372.3 256.9,372.3 257.5,372.2 258.1,372.2 258.7,372.1 259.3,372.0 259.9,372.0 260.5,371.9 261.1,371.8 261.7,371.7 262.3,371.6 262.8,371.5 263.4,371.4 264.0,371.3 264.6,371.1 265.2,371.0 265.8,370.8 266.4,370.6 267.0,370.4 267.6,370.1 268.2,369.8 268.7,369.5 269.3,369.2 269.9,368.8 270.5,368.4 271.1,367.9 271.7,367.4 272.3,366.9 272.9,366.3 273.5,365.8 274.1,365.3 274.6,364.9 275.2,364.6 275.8,364.4 276.4,364.4 277.0,364.5 277.6,364.7 278.2,365.1 278.8,365.6 279.4,366.1 280.0,366.6 280.5,367.1 281.1,367.6 281.7,368.1 282.3,368.6 282.9,369.0 283.5,369.3 284.1,369.7 284.7,370.0 285.3,370.2 285.9,370.5 286.4,370.7 287.0,370.9 287.6,371.1 288.2,371.2 288.8,371.3 289.4,371.5 290.0,371.6 290.6,371.7 291.2,371.8 291.8,371.9 292.3,371.9 292.9,372.0 293.5,372.1 294.1,372.1 294.7,372.2 295.3,372.2 295.9,372.3 296.5,372.3 297.1,372.4 297.7,372.4 298.2,372.4 298.8,372.5 299.4,372.5 300.0,372.5 300.6,372.6 301.2,372.6 301.8,372.6 302.4,372.6 303.0,372.6 303.6,372.7 304.1,372.7 304.7,372.7 305.3,372.7 305.9,372.7 306.5,372.7 307.1,372.7 307.7,372.8 308.3,372.8 308.9,372.8 309.5,372.8 310.0,372.8 310.6,372.8 311.2,372.8 311.8,372.8 312.4,372.8 313.0,372.8 313.6,372.9 314.2,372.9 314.8,372.9 315.4,372.9 315.9,372.9 316.5,372.9 317.1,372.9 317.7,372.9 318.3,372.9 318.9,372.9 319.5,372.9 320.1,372.9 320.7,372.9 321.3,372.9 321.8,372.9 322.4,372.9 323.0,372.9 323.6,372.9 324.2,372.9 324.8,373.0 325.4,373.0 326.0,373.0 326.6,373.0 327.2,373.0 327.7,373.0 328.3,373.0 328.9,373.0 329.5,373.0 330.1,373.0 330.7,373.0 331.3,373.0 331.9,373.0 332.5,373.0 333.1,373.0 333.6,373.0 334.2,373.0 334.8,373.0 335.4,373.0 336.0,373.0 336.6,373.0 337.2,373.0 337.8,373.0 338.4,373.0 339.0,373.0 339.5,373.0 340.1,373.0 340.7,373.0 341.3,373.0 341.9,373.0 342.5,373.0 343.1,373.0 343.7,373.0 344.3,373.0 344.9,373.0 345.4,373.0 346.0,373.0 346.6,373.0 347.2,373.0 347.8,373.0 348.4,373.0 349.0,373.0 349.6,373.0 350.2,373.0 350.8,373.0 351.3,373.0 351.9,373.0 352.5,373.0 353.1,373.0 353.7,373.0 354.3,373.0 354.9,373.0 355.5,373.0 356.1,373.0 356.7,373.0 357.2,373.0 357.8,373.0 358.4,373.1 359.0,373.1 359.6,373.1 360.2,373.1 360.8,373.1 361.4,373.1 362.0,373.1 362.6,373.1 363.1,373.1 363.7,373.1 364.3,373.1 364.9,373.1 365.5,373.1 366.1,373.1 366.7,373.1 367.3,373.1 367.9,373.1 368.5,373.1 369.0,373.1 369.6,373.1 370.2,373.1 370.8,373.1 371.4,373.1 372.0,373.1 372.6,373.1 373.2,373.1 373.8,373.1 374.4,373.1 374.9,373.1 375.5,373.1 376.1,373.1 376.7,373.1 377.3,373.1 377.9,373.1 378.5,373.1 379.1,373.1 379.7,373.1 380.3,373.1 380.8,373.1 381.4,373.1 382.0,373.1 382.6,373.1 383.2,373.1 383.8,373.1 384.4,373.1 385.0,373.1 385.6,373.1 386.2,373.1 386.7,373.1 387.3,373.1 387.9,373.1 388.5,373.1 389.1,373.1 389.7,373.1 390.3,373.1 390.9,373.1 391.5,373.1 392.1,373.1 392.6,373.1 393.2,373.1 393.8,373.1 394.4,373.1 395.0,373.1 395.6,373.1 396.2,373.1 396.8,373.1 397.4,373.1 398.0,373.1 398.5,373.1 399.1,373.1 399.7,373.1 400.3,373.1 400.9,373.1 401.5,373.1 402.1,373.1 402.7,373.1 403.3,373.1 403.9,373.1 404.4,373.1 405.0,373.1 405.6,373.1 406.2,373.1 406.8,373.1 407.4,373.1 408.0,373.1 408.6,373.1 409.2,373.1 409.8,373.1 410.3,373.1 410.9,373.1 411.5,373.1 412.1,373.1 412.7,373.1 413.3,373.1 413.9,373.1 414.5,373.1 415.1,373.1 415.7,373.1 416.2,373.1 416.8,373.1 417.4,373.1 418.0,373.1 418.6,373.1 419.2,373.1 419.8,373.1 420.4,373.1 421.0,373.1 421.6,373.1 422.1,373.1 422.7,373.1 423.3,373.1 423.9,373.1 424.5,373.1 425.1,373.1 425.7,373.1 426.3,373.1 426.9,373.1 427.5,373.1 428.0,373.1 428.6,373.1 429.2,373.1 429.8,373.1 430.4,373.1 431.0,373.1 431.6,373.1 432.2,373.1 432.8,373.1 433.4,373.1 433.9,373.1 434.5,373.1 435.1,373.1 435.7,373.1 436.3,373.1 436.9,373.1 437.5,373.1 438.1,373.1 438.7,373.1 439.3,373.1 439.8,373.1 440.4,373.1 441.0,373.1 441.6,373.1 442.2,373.1 442.8,373.1 443.4,373.1 444.0,373.1 444.6,373.1 445.2,373.1 445.7,373.1 446.3,373.1 446.9,373.1 447.5,373.1 448.1,373.1 448.7,373.1 449.3,373.1 449.9,373.1 450.5,373.1 451.1,373.1 451.6,373.1 452.2,373.1 452.8,373.1 453.4,373.1 454.0,373.1 454.6,373.1 455.2,373.1 455.8,373.1 456.4,373.1 457.0,373.1 457.5,373.1 458.1,373.1 458.7,373.1 459.3,373.1 459.9,373.1 460.5,373.1 461.1,373.1 461.7,373.1 462.3,373.1 462.9,373.1 463.4,373.1 464.0,373.1 464.6,373.1 465.2,373.1 465.8,373.1 466.4,373.1 467.0,373.1 467.6,373.1 468.2,373.1 468.8,373.1 469.3,373.1 469.9,373.1 470.5,373.1 471.1,373.1 471.7,373.1 472.3,373.1 472.9,373.1 473.5,373.1 474.1,373.1 474.7,373.1 475.2,373.1 475.8,373.1 476.4,373.1 477.0,373.1 477.6,373.1 478.2,373.1 478.8,373.1 479.4,373.1 480.0,373.1 480.6,373.1 481.1,373.1 481.7,373.1 482.3,373.1 482.9,373.1 483.5,373.1 484.1,373.1 484.7,373.1 485.3,373.1 485.9,373.1 486.5,373.1 487.0,373.1 487.6,373.1 488.2,373.1 488.8,373.1 489.4,373.1 490.0,373.1 490.6,373.1 491.2,373.1 491.8,373.1 492.4,373.1 492.9,373.1 493.5,373.1 494.1,373.1 494.7,373.1 495.3,373.1 495.9,373.1 496.5,373.1 497.1,373.1 497.7,373.1 498.3,373.1 498.8,373.1 499.4,373.1 500.0,373.1 500.6,373.1 501.2,373.1 501.8,373.1 501.8,373.1 212.7,373.1" fill="#e377c2" fill-opacity="0.3"/><polygon points="212.7,373.0 213.3,373.0 213.9,373.0 214.5,373.0 215.1,373.0 215.6,373.0 216.2,373.0 216.8,373.0 217.4,373.0 218.0,373.0 218.6,373.0 219.2,373.0 219.8,373.0 220.4,373.0 221.0,373.0 221.5,373.0 222.1,373.0 222.7,373.0 223.3,373.0 223.9,373.0 224.5,373.0 225.1,373.0 225.7,373.0 226.3,373.0 226.9,373.0 227.4,373.0 228.0,373.0 228.6,373.0 229.2,373.0 229.8,373.0 230.4,373.0 231.0,373.0 231.6,373.0 232.2,373.0 232.8,373.0 233.3,373.0 233.9,373.0 234.5,373.0 235.1,372.9 235.7,372.9 236.3,372.9 236.9,372.9 237.5,372.9 238.1,372.9 238.7,372.9 239.2,372.9 239.8,372.9 240.4,372.9 241.0,372.9 241.6,372.9 242.2,372.9 242.8,372.9 243.4,372.9 244.0,372.9 244.6,372.9 245.1,372.9 245.7,372.9 246.3,372.9 246.9,372.9 247.5,372.9 248.1,372.9 248.7,372.9 249.3,372.9 249.9,372.9 250.5,372.9 251.0,372.9 251.6,372.9 252.2,372.9 252.8,372.9 253.4,372.9 254.0,372.9 254.6,372.9 255.2,372.9 255.8,372.9 256.4,372.8 256.9,372.8 257.5,372.8 258.1,372.8 258.7,372.8 259.3,372.8 259.9,372.8 260.5,372.8 261.1,372.8 261.7,372.8 262.3,372.8 262.8,372.8 263.4,372.8 264.0,372.8 264.6,372.8 265.2,372.8 265.8,372.8 266.4,372.8 267.0,372.7 267.6,372.7 268.2,372.7 268.7,372.7 269.3,372.7 269.9,372.7 270.5,372.7 271.1,372.7 271.7,372.7 272.3,372.7 272.9,372.7 273.5,372.6 274.1,372.6 274.6,372.6 275.2,372.6 275.8,372.6 276.4,372.6 277.0,372.6 277.6,372.6 278.2,372.5 278.8,372.5 279.4,372.5 280.0,372.5 280.5,372.5 281.1,372.5 281.7,372.4 282.3,372.4 282.9,372.4 283.5,372.4 284.1,372.3 284.7,372.3 285.3,372.3 285.9,372.3 286.4,372.2 287.0,372.2 287.6,372.2 288.2,372.1 288.8,372.1 289.4,372.1 290.0,372.0 290.6,372.0 291.2,371.9 291.8,371.9 292.3,371.8 292.9,371.8 293.5,371.7 294.1,371.7 294.7,371.6 295.3,371.5 295.9,371.5 296.5,371.4 297.1,371.3 297.7,371.2 298.2,371.1 298.8,371.0 299.4,370.9 300.0,370.7 300.6,370.6 301.2,370.4 301.8,370.3 302.4,370.1 303.0,369.9 303.6,369.7 304.1,369.4 304.7,369.1 305.3,368.8 305.9,368.5 306.5,368.1 307.1,367.7 307.7,367.2 308.3,366.6 308.9,366.0 309.5,365.2 310.0,364.4 310.6,363.4 311.2,362.3 311.8,360.9 312.4,359.3 313.0,357.3 313.6,355.0 314.2,352.2 314.8,348.8 315.4,344.7 315.9,339.6 316.5,333.6 317.1,326.5 317.7,318.6 318.3,310.3 318.9,302.8 319.5,297.6 320.1,296.0 320.7,298.6 321.3,304.6 321.8,312.4 322.4,320.7 323.0,328.4 323.6,335.3 324.2,341.0 324.8,345.8 325.4,349.7 326.0,353.0 326.6,355.7 327.2,357.9 327.7,359.7 328.3,361.3 328.9,362.6 329.5,363.7 330.1,364.6 330.7,365.4 331.3,366.2 331.9,366.8 332.5,367.3 333.1,367.8 333.6,368.2 334.2,368.6 334.8,368.9 335.4,369.2 336.0,369.5 336.6,369.7 337.2,369.9 337.8,370.1 338.4,370.3 339.0,370.5 339.5,370.6 340.1,370.8 340.7,370.9 341.3,371.0 341.9,371.1 342.5,371.2 343.1,371.3 343.7,371.4 344.3,371.5 344.9,371.6 345.4,371.6 346.0,371.7 346.6,371.8 347.2,371.8 347.8,371.9 348.4,371.9 349.0,372.0 349.6,372.0 350.2,372.0 350.8,372.1 351.3,372.1 351.9,372.2 352.5,372.2 353.1,372.2 353.7,372.3 354.3,372.3 354.9,372.3 355.5,372.3 356.1,372.4 356.7,372.4 357.2,372.4 357.8,372.4 358.4,372.4 359.0,372.5 359.6,372.5 360.2,372.5 360.8,372.5 361.4,372.5 362.0,372.6 362.6,372.6 363.1,372.6 363.7,372.6 364.3,372.6 364.9,372.6 365.5,372.6 366.1,372.6 366.7,372.7 367.3,372.7 367.9,372.7 368.5,372.7 369.0,372.7 369.6,372.7 370.2,372.7 370.8,372.7 371.4,372.7 372.0,372.7 372.6,372.8 373.2,372.8 373.8,372.8 374.4,372.8 374.9,372.8 375.5,372.8 376.1,372.8 376.7,372.8 377.3,372.8 377.9,372.8 378.5,372.8 379.1,372.8 379.7,372.8 380.3,372.8 380.8,372.8 381.4,372.8 382.0,372.9 382.6,372.9 383.2,372.9 383.8,372.9 384.4,372.9 385.0,372.9 385.6,372.9 386.2,372.9 386.7,372.9 387.3,372.9 387.9,372.9 388.5,372.9 389.1,372.9 389.7,372.9 390.3,372.9 390.9,372.9 391.5,372.9 392.1,372.9 392.6,372.9 393.2,372.9 393.8,372.9 394.4,372.9 395.0,372.9 395.6,372.9 396.2,372.9 396.8,372.9 397.4,372.9 398.0,372.9 398.5,372.9 399.1,373.0 399.7,373.0 400.3,373.0 400.9,373.0 401.5,373.0 402.1,373.0 402.7,373.0 403.3,373.0 403.9,373.0 404.4,373.0 405.0,373.0 405.6,373.0 406.2,373.0 406.8,373.0 407.4,373.0 408.0,373.0 408.6,373.0 409.2,373.0 409.8,373.0 410.3,373.0 410.9,373.0 411.5,373.0 412.1,373.0 412.7,373.0 413.3,373.0 413.9,373.0 414.5,373.0 415.1,373.0 415.7,373.0 416.2,373.0 416.8,373.0 417.4,373.0 418.0,373.0 418.6,373.0 419.2,373.0 419.8,373.0 420.4,373.0 421.0,373.0 421.6,373.0 422.1,373.0 422.7,373.0 423.3,373.0 423.9,373.0 424.5,373.0 425.1,373.0 425.7,373.0 426.3,373.0 426.9,373.0 427.5,373.0 428.0,373.0 428.6,373.0 429.2,373.0 429.8,373.0 430.4,373.0 431.0,373.0 431.6,373.0 432.2,373.0 432.8,373.0 433.4,373.0 433.9,373.0 434.5,373.0 435.1,373.0 435.7,373.0 436.3,373.0 436.9,373.0 437.5,373.0 438.1,373.0 438.7,373.0 439.3,373.0 439.8,373.0 440.4,373.0 441.0,373.0 441.6,373.0 442.2,373.0 442.8,373.0 443.4,373.0 444.0,373.0 444.6,373.1 445.2,373.1 445.7,373.1 446.3,373.1 446.9,373.1 447.5,373.1 448.1,373.1 448.7,373.1 449.3,373.1 449.9,373.1 450.5,373.1 451.1,373.1 451.6,373.1 452.2,373.1 452.8,373.1 453.4,373.1 454.0,373.1 454.6,373.1 455.2,373.1 455.8,373.1 456.4,373.1 457.0,373.1 457.5,373.1 458.1,373.1 458.7,373.1 459.3,373.1 459.9,373.1 460.5,373.1 461.1,373.1 461.7,373.1 462.3,373.1 462.9,373.1 463.4,373.1 464.0,373.1 464.6,373.1 465.2,373.1 465.8,373.1 466.4,373.1 467.0,373.1 467.6,373.1 468.2,373.1 468.8,373.1 469.3,373.1 469.9,373.1 470.5,373.1 471.1,373.1 471.7,373.1 472.3,373.1 472.9,373.1 473.5,373.1 474.1,373.1 474.7,373.1 475.2,373.1 475.8,373.1 476.4,373.1 477.0,373.1 477.6,373.1 478.2,373.1 478.8,373.1 479.4,373.1 480.0,373.1 480.6,373.1 481.1,373.1 481.7,373.1 482.3,373.1 482.9,373.1 483.5,373.1 484.1,373.1 484.7,373.1 485.3,373.1 485.9,373.1 486.5,373.1 487.0,373.1 487.6,373.1 488.2,373.1 488.8,373.1 489.4,373.1 490.0,373.1 490.6,373.1 491.2,373.1 491.8,373.1 492.4,373.1 492.9,373.1 493.5,373.1 494.1,373.1 494.7,373.1 495.3,373.1 495.9,373.1 496.5,373.1 497.1,373.1 497.7,373.1 498.3,373.1 498.8,373.1 499.4,373.1 500.0,373.1 500.6,373.1 501.2,373.1 501.8,373.1 501.8,373.1 212.7,373.1" fill="#e377c2" fill-opacity="0.3"/><polygon points="212.7,372.7 213.3,372.7 213.9,372.7 214.5,372.7 215.1,372.7 215.6,372.7 216.2,372.7 216.8,372.7 217.4,372.7 218.0,372.7 218.6,372.7 219.2,372.7 219.8,372.7 220.4,372.7 221.0,372.7 221.5,372.7 222.1,372.7 222.7,372.7 223.3,372.7 223.9,372.7 224.5,372.7 225.1,372.6 225.7,372.6 226.3,372.6 226.9,372.6 227.4,372.6 228.0,372.6 228.6,372.6 229.2,372.6 229.8,372.6 230.4,372.6 231.0,372.6 231.6,372.6 232.2,372.6 232.8,372.6 233.3,372.6 233.9,372.6 234.5,372.6 235.1,372.6 235.7,372.5 236.3,372.5 236.9,372.5 237.5,372.5 238.1,372.5 238.7,372.5 239.2,372.5 239.8,372.5 240.4,372.5 241.0,372.5 241.6,372.5 242.2,372.5 242.8,372.5 243.4,372.5 244.0,372.4 244.6,372.4 245.1,372.4 245.7,372.4 246.3,372.4 246.9,372.4 247.5,372.4 248.1,372.4 248.7,372.4 249.3,372.4 249.9,372.4 250.5,372.3 251.0,372.3 251.6,372.3 252.2,372.3 252.8,372.3 253.4,372.3 254.0,372.3 254.6,372.3 255.2,372.2 255.8,372.2 256.4,372.2 256.9,372.2 257.5,372.2 258.1,372.2 258.7,372.2 259.3,372.1 259.9,372.1 260.5,372.1 261.1,372.1 261.7,372.1 262.3,372.1 262.8,372.1 263.4,372.0 264.0,372.0 264.6,372.0 265.2,372.0 265.8,372.0 266.4,371.9 267.0,371.9 267.6,371.9 268.2,371.9 268.7,371.8 269.3,371.8 269.9,371.8 270.5,371.8 271.1,371.8 271.7,371.7 272.3,371.7 272.9,371.7 273.5,371.6 274.1,371.6 274.6,371.6 275.2,371.6 275.8,371.5 276.4,371.5 277.0,371.4 277.6,371.4 278.2,371.4 278.8,371.3 279.4,371.3 280.0,371.3 280.5,371.2 281.1,371.2 281.7,371.1 282.3,371.1 282.9,371.0 283.5,371.0 284.1,370.9 284.7,370.9 285.3,370.8 285.9,370.8 286.4,370.7 287.0,370.6 287.6,370.6 288.2,370.5 288.8,370.4 289.4,370.4 290.0,370.3 290.6,370.2 291.2,370.1 291.8,370.0 292.3,370.0 292.9,369.9 293.5,369.8 294.1,369.7 294.7,369.6 295.3,369.4 295.9,369.3 296.5,369.2 297.1,369.1 297.7,368.9 298.2,368.8 298.8,368.6 299.4,368.5 300.0,368.3 300.6,368.1 301.2,367.9 301.8,367.7 302.4,367.5 303.0,367.3 303.6,367.1 304.1,366.8 304.7,366.6 305.3,366.3 305.9,366.0 306.5,365.7 307.1,365.3 307.7,365.0 308.3,364.6 308.9,364.2 309.5,363.7 310.0,363.3 310.6,362.8 311.2,362.2 311.8,361.6 312.4,361.0 313.0,360.3 313.6,359.5 314.2,358.7 314.8,357.8 315.4,356.9 315.9,355.8 316.5,354.7 317.1,353.4 317.7,352.0 318.3,350.5 318.9,348.9 319.5,347.0 320.1,345.0 320.7,342.8 321.3,340.4 321.8,337.6 322.4,334.7 323.0,331.4 323.6,327.8 324.2,323.8 324.8,319.6 325.4,314.9 326.0,310.0 326.6,304.9 327.2,299.6 327.7,294.3 328.3,289.2 328.9,284.6 329.5,280.6 330.1,277.5 330.7,275.6 331.3,275.1 331.9,275.8 332.5,277.9 333.1,281.1 333.6,285.2 334.2,289.9 334.8,295.1 335.4,300.4 336.0,305.6 336.6,310.7 337.2,315.6 337.8,320.2 338.4,324.4 339.0,328.3 339.5,331.9 340.1,335.1 340.7,338.0 341.3,340.7 341.9,343.1 342.5,345.3 343.1,347.3 343.7,349.1 344.3,350.8 344.9,352.3 345.4,353.6 346.0,354.9 346.6,356.0 347.2,357.0 347.8,358.0 348.4,358.8 349.0,359.7 349.6,360.4 350.2,361.1 350.8,361.7 351.3,362.3 351.9,362.8 352.5,363.3 353.1,363.8 353.7,364.3 354.3,364.7 354.9,365.0 355.5,365.4 356.1,365.7 356.7,366.1 357.2,366.3 357.8,366.6 358.4,366.9 359.0,367.1 359.6,367.4 360.2,367.6 360.8,367.8 361.4,368.0 362.0,368.2 362.6,368.3 363.1,368.5 363.7,368.7 364.3,368.8 364.9,369.0 365.5,369.1 366.1,369.2 366.7,369.3 367.3,369.5 367.9,369.6 368.5,369.7 369.0,369.8 369.6,369.9 370.2,370.0 370.8,370.1 371.4,370.2 372.0,370.2 372.6,370.3 373.2,370.4 373.8,370.5 374.4,370.5 374.9,370.6 375.5,370.7 376.1,370.7 376.7,370.8 377.3,370.8 377.9,370.9 378.5,371.0 379.1,371.0 379.7,371.1 380.3,371.1 380.8,371.1 381.4,371.2 382.0,371.2 382.6,371.3 383.2,371.3 383.8,371.4 384.4,371.4 385.0,371.4 385.6,371.5 386.2,371.5 386.7,371.5 387.3,371.6 387.9,371.6 388.5,371.6 389.1,371.7 389.7,371.7 390.3,371.7 390.9,371.7 391.5,371.8 392.1,371.8 392.6,371.8 393.2,371.8 393.8,371.9 394.4,371.9 395.0,371.9 395.6,371.9 396.2,372.0 396.8,372.0 397.4,372.0 398.0,372.0 398.5,372.0 399.1,372.1 399.7,372.1 400.3,372.1 400.9,372.1 401.5,372.1 402.1,372.1 402.7,372.2 403.3,372.2 403.9,372.2 404.4,372.2 405.0,372.2 405.6,372.2 406.2,372.2 406.8,372.3 407.4,372.3 408.0,372.3 408.6,372.3 409.2,372.3 409.8,372.3 410.3,372.3 410.9,372.3 411.5,372.4 412.1,372.4 412.7,372.4 413.3,372.4 413.9,372.4 414.5,372.4 415.1,372.4 415.7,372.4 416.2,372.4 416.8,372.4 417.4,372.5 418.0,372.5 418.6,372.5 419.2,372.5 419.8,372.5 420.4,372.5 421.0,372.5 421.6,372.5 422.1,372.5 422.7,372.5 423.3,372.5 423.9,372.5 424.5,372.5 425.1,372.6 425.7,372.6 426.3,372.6 426.9,372.6 427.5,372.6 428.0,372.6 428.6,372.6 429.2,372.6 429.8,372.6 430.4,372.6 431.0,372.6 431.6,372.6 432.2,372.6 432.8,372.6 433.4,372.6 433.9,372.6 434.5,372.7 435.1,372.7 435.7,372.7 436.3,372.7 436.9,372.7 437.5,372.7 438.1,372.7 438.7,372.7 439.3,372.7 439.8,372.7 440.4,372.7 441.0,372.7 441.6,372.7 442.2,372.7 442.8,372.7 443.4,372.7 444.0,372.7 444.6,372.7 445.2,372.7 445.7,372.7 446.3,372.7 446.9,372.7 447.5,372.8 448.1,372.8 448.7,372.8 449.3,372.8 449.9,372.8 450.5,372.8 451.1,372.8 451.6,372.8 452.2,372.8 452.8,372.8 453.4,372.8 454.0,372.8 454.6,372.8 455.2,372.8 455.8,372.8 456.4,372.8 457.0,372.8 457.5,372.8 458.1,372.8 458.7,372.8 459.3,372.8 459.9,372.8 460.5,372.8 461.1,372.8 461.7,372.8 462.3,372.8 462.9,372.8 463.4,372.8 464.0,372.8 464.6,372.8 465.2,372.8 465.8,372.8 466.4,372.8 467.0,372.9 467.6,372.9 468.2,372.9 468.8,372.9 469.3,372.9 469.9,372.9 470.5,372.9 471.1,372.9 471.7,372.9 472.3,372.9 472.9,372.9 473.5,372.9 474.1,372.9 474.7,372.9 475.2,372.9 475.8,372.9 476.4,372.9 477.0,372.9 477.6,372.9 478.2,372.9 478.8,372.9 479.4,372.9 480.0,372.9 480.6,372.9 481.1,372.9 481.7,372.9 482.3,372.9 482.9,372.9 483.5,372.9 484.1,372.9 484.7,372.9 485.3,372.9 485.9,372.9 486.5,372.9 487.0,372.9 487.6,372.9 488.2,372.9 488.8,372.9 489.4,372.9 490.0,372.9 490.6,372.9 491.2,372.9 491.8,372.9 492.4,372.9 492.9,372.9 493.5,372.9 494.1,372.9 494.7,372.9 495.3,372.9 495.9,372.9 496.5,372.9 497.1,372.9 497.7,372.9 498.3,372.9 498.8,372.9 499.4,372.9 500.0,372.9 500.6,373.0 501.2,373.0 501.8,373.0 501.8,373.1 212.7,373.1" fill="#e377c2" fill-opacity="0.3"/><polygon points="212.7,373.0 213.3,373.0 213.9,373.0 214.5,373.0 215.1,373.0 215.6,373.0 216.2,373.0 216.8,373.0 217.4,373.0 218.0,373.0 218.6,373.0 219.2,373.0 219.8,373.0 220.4,373.0 221.0,373.0 221.5,373.0 222.1,373.0 222.7,373.0 223.3,373.0 223.9,373.0 224.5,373.0 225.1,373.0 225.7,373.0 226.3,373.0 226.9,373.0 227.4,373.0 228.0,373.0 228.6,373.0 229.2,373.0 229.8,373.0 230.4,373.0 231.0,373.0 231.6,373.0 232.2,373.0 232.8,373.0 233.3,373.0 233.9,373.0 234.5,373.0 235.1,373.0 235.7,373.0 236.3,373.0 236.9,373.0 237.5,373.0 238.1,373.0 238.7,373.0 239.2,373.0 239.8,372.9 240.4,372.9 241.0,372.9 241.6,372.9 242.2,372.9 242.8,372.9 243.4,372.9 244.0,372.9 244.6,372.9 245.1,372.9 245.7,372.9 246.3,372.9 246.9,372.9 247.5,372.9 248.1,372.9 248.7,372.9 249.3,372.9 249.9,372.9 250.5,372.9 251.0,372.9 251.6,372.9 252.2,372.9 252.8,372.9 253.4,372.9 254.0,372.9 254.6,372.9 255.2,372.9 255.8,372.9 256.4,372.9 256.9,372.9 257.5,372.9 258.1,372.9 258.7,372.9 259.3,372.9 259.9,372.9 260.5,372.9 261.1,372.9 261.7,372.9 262.3,372.9 262.8,372.9 263.4,372.9 264.0,372.9 264.6,372.8 265.2,372.8 265.8,372.8 266.4,372.8 267.0,372.8 267.6,372.8 268.2,372.8 268.7,372.8 269.3,372.8 269.9,372.8 270.5,372.8 271.1,372.8 271.7,372.8 272.3,372.8 272.9,372.8 273.5,372.8 274.1,372.8 274.6,372.8 275.2,372.8 275.8,372.8 276.4,372.7 277.0,372.7 277.6,372.7 278.2,372.7 278.8,372.7 279.4,372.7 280.0,372.7 280.5,372.7 281.1,372.7 281.7,372.7 282.3,372.7 282.9,372.7 283.5,372.7 284.1,372.6 284.7,372.6 285.3,372.6 285.9,372.6 286.4,372.6 287.0,372.6 287.6,372.6 288.2,372.6 288.8,372.6 289.4,372.5 290.0,372.5 290.6,372.5 291.2,372.5 291.8,372.5 292.3,372.5 292.9,372.5 293.5,372.4 294.1,372.4 294.7,372.4 295.3,372.4 295.9,372.4 296.5,372.4 297.1,372.3 297.7,372.3 298.2,372.3 298.8,372.3 299.4,372.2 300.0,372.2 300.6,372.2 301.2,372.2 301.8,372.1 302.4,372.1 303.0,372.1 303.6,372.0 304.1,372.0 304.7,371.9 305.3,371.9 305.9,371.9 306.5,371.8 307.1,371.8 307.7,371.7 308.3,371.7 308.9,371.6 309.5,371.6 310.0,371.5 310.6,371.4 311.2,371.4 311.8,371.3 312.4,371.2 313.0,371.1 313.6,371.0 314.2,370.9 314.8,370.8 315.4,370.7 315.9,370.6 316.5,370.4 317.1,370.3 317.7,370.1 318.3,370.0 318.9,369.8 319.5,369.6 320.1,369.3 320.7,369.1 321.3,368.8 321.8,368.5 322.4,368.2 323.0,367.8 323.6,367.4 324.2,367.0 324.8,366.5 325.4,365.9 326.0,365.2 326.6,364.5 327.2,363.6 327.7,362.6 328.3,361.5 328.9,360.1 329.5,358.6 330.1,356.7 330.7,354.4 331.3,351.7 331.9,348.4 332.5,344.4 333.1,339.3 333.6,332.9 334.2,324.8 334.8,314.6 335.4,301.5 336.0,285.3 336.6,266.0 337.2,245.1 337.8,226.2 338.4,215.3 339.0,216.6 339.5,229.6 340.1,249.3 340.7,270.1 341.3,288.9 341.9,304.4 342.5,316.8 343.1,326.6 343.7,334.3 344.3,340.4 344.9,345.3 345.4,349.2 346.0,352.3 346.6,354.9 347.2,357.1 347.8,358.9 348.4,360.4 349.0,361.7 349.6,362.8 350.2,363.8 350.8,364.6 351.3,365.4 351.9,366.0 352.5,366.6 353.1,367.1 353.7,367.5 354.3,367.9 354.9,368.3 355.5,368.6 356.1,368.9 356.7,369.1 357.2,369.4 357.8,369.6 358.4,369.8 359.0,370.0 359.6,370.2 360.2,370.3 360.8,370.5 361.4,370.6 362.0,370.7 362.6,370.8 363.1,370.9 363.7,371.0 364.3,371.1 364.9,371.2 365.5,371.3 366.1,371.4 366.7,371.4 367.3,371.5 367.9,371.6 368.5,371.6 369.0,371.7 369.6,371.7 370.2,371.8 370.8,371.8 371.4,371.9 372.0,371.9 372.6,372.0 373.2,372.0 373.8,372.0 374.4,372.1 374.9,372.1 375.5,372.1 376.1,372.2 376.7,372.2 377.3,372.2 377.9,372.3 378.5,372.3 379.1,372.3 379.7,372.3 380.3,372.3 380.8,372.4 381.4,372.4 382.0,372.4 382.6,372.4 383.2,372.4 383.8,372.5 384.4,372.5 385.0,372.5 385.6,372.5 386.2,372.5 386.7,372.5 387.3,372.6 387.9,372.6 388.5,372.6 389.1,372.6 389.7,372.6 390.3,372.6 390.9,372.6 391.5,372.6 392.1,372.6 392.6,372.7 393.2,372.7 393.8,372.7 394.4,372.7 395.0,372.7 395.6,372.7 396.2,372.7 396.8,372.7 397.4,372.7 398.0,372.7 398.5,372.7 399.1,372.7 399.7,372.8 400.3,372.8 400.9,372.8 401.5,372.8 402.1,372.8 402.7,372.8 403.3,372.8 403.9,372.8 404.4,372.8 405.0,372.8 405.6,372.8 406.2,372.8 406.8,372.8 407.4,372.8 408.0,372.8 408.6,372.8 409.2,372.8 409.8,372.8 410.3,372.9 410.9,372.9 411.5,372.9 412.1,372.9 412.7,372.9 413.3,372.9 413.9,372.9 414.5,372.9 415.1,372.9 415.7,372.9 416.2,372.9 416.8,372.9 417.4,372.9 418.0,372.9 418.6,372.9 419.2,372.9 419.8,372.9 420.4,372.9 421.0,372.9 421.6,372.9 422.1,372.9 422.7,372.9 423.3,372.9 423.9,372.9 424.5,372.9 425.1,372.9 425.7,372.9 426.3,372.9 426.9,372.9 427.5,372.9 428.0,372.9 428.6,372.9 429.2,373.0 429.8,373.0 430.4,373.0 431.0,373.0 431.6,373.0 432.2,373.0 432.8,373.0 433.4,373.0 433.9,373.0 434.5,373.0 435.1,373.0 435.7,373.0 436.3,373.0 436.9,373.0 437.5,373.0 438.1,373.0 438.7,373.0 439.3,373.0 439.8,373.0 440.4,373.0 441.0,373.0 441.6,373.0 442.2,373.0 442.8,373.0 443.4,373.0 444.0,373.0 444.6,373.0 445.2,373.0 445.7,373.0 446.3,373.0 446.9,373.0 447.5,373.0 448.1,373.0 448.7,373.0 449.3,373.0 449.9,373.0 450.5,373.0 451.1,373.0 451.6,373.0 452.2,373.0 452.8,373.0 453.4,373.0 454.0,373.0 454.6,373.0 455.2,373.0 455.8,373.0 456.4,373.0 457.0,373.0 457.5,373.0 458.1,373.0 458.7,373.0 459.3,373.0 459.9,373.0 460.5,373.0 461.1,373.0 461.7,373.0 462.3,373.0 462.9,373.0 463.4,373.0 464.0,373.0 464.6,373.0 465.2,373.0 465.8,373.0 466.4,373.0 467.0,373.0 467.6,373.0 468.2,373.0 468.8,373.0 469.3,373.0 469.9,373.0 470.5,373.0 471.1,373.0 471.7,373.0 472.3,373.0 472.9,373.0 473.5,373.0 474.1,373.0 474.7,373.0 475.2,373.0 475.8,373.0 476.4,373.0 477.0,373.0 477.6,373.0 478.2,373.0 478.8,373.1 479.4,373.1 480.0,373.1 480.6,373.1 481.1,373.1 481.7,373.1 482.3,373.1 482.9,373.1 483.5,373.1 484.1,373.1 484.7,373.1 485.3,373.1 485.9,373.1 486.5,373.1 487.0,373.1 487.6,373.1 488.2,373.1 488.8,373.1 489.4,373.1 490.0,373.1 490.6,373.1 491.2,373.1 491.8,373.1 492.4,373.1 492.9,373.1 493.5,373.1 494.1,373.1 494.7,373.1 495.3,373.1 495.9,373.1 496.5,373.1 497.1,373.1 497.7,373.1 498.3,373.1 498.8,373.1 499.4,373.1 500.0,373.1 500.6,373.1 501.2,373.1 501.8,373.1 501.8,373.1 212.7,373.1" fill="#e377c2" fill-opacity="0.3"/><polygon points="212.7,372.8 213.3,372.8 213.9,372.8 214.5,372.8 215.1,372.8 215.6,372.8 216.2,372.8 216.8,372.8 217.4,372.8 218.0,372.8 218.6,372.8 219.2,372.8 219.8,372.8 220.4,372.8 221.0,372.8 221.5,372.8 222.1,372.8 222.7,372.8 223.3,372.8 223.9,372.8 224.5,372.8 225.1,372.8 225.7,372.8 226.3,372.8 226.9,372.8 227.4,372.8 228.0,372.8 228.6,372.8 229.2,372.8 229.8,372.8 230.4,372.8 231.0,372.8 231.6,372.8 232.2,372.8 232.8,372.8 233.3,372.7 233.9,372.7 234.5,372.7 235.1,372.7 235.7,372.7 236.3,372.7 236.9,372.7 237.5,372.7 238.1,372.7 238.7,372.7 239.2,372.7 239.8,372.7 240.4,372.7 241.0,372.7 241.6,372.7 242.2,372.7 242.8,372.7 243.4,372.7 244.0,372.7 244.6,372.7 245.1,372.7 245.7,372.7 246.3,372.7 246.9,372.7 247.5,372.7 248.1,372.6 248.7,372.6 249.3,372.6 249.9,372.6 250.5,372.6 251.0,372.6 251.6,372.6 252.2,372.6 252.8,372.6 253.4,372.6 254.0,372.6 254.6,372.6 255.2,372.6 255.8,372.6 256.4,372.6 256.9,372.6 257.5,372.6 258.1,372.5 258.7,372.5 259.3,372.5 259.9,372.5 260.5,372.5 261.1,372.5 261.7,372.5 262.3,372.5 262.8,372.5 263.4,372.5 264.0,372.5 264.6,372.5 265.2,372.5 265.8,372.4 266.4,372.4 267.0,372.4 267.6,372.4 268.2,372.4 268.7,372.4 269.3,372.4 269.9,372.4 270.5,372.4 271.1,372.4 271.7,372.3 272.3,372.3 272.9,372.3 273.5,372.3 274.1,372.3 274.6,372.3 275.2,372.3 275.8,372.3 276.4,372.2 277.0,372.2 277.6,372.2 278.2,372.2 278.8,372.2 279.4,372.2 280.0,372.2 280.5,372.1 281.1,372.1 281.7,372.1 282.3,372.1 282.9,372.1 283.5,372.0 284.1,372.0 284.7,372.0 285.3,372.0 285.9,372.0 286.4,371.9 287.0,371.9 287.6,371.9 288.2,371.9 288.8,371.9 289.4,371.8 290.0,371.8 290.6,371.8 291.2,371.8 291.8,371.7 292.3,371.7 292.9,371.7 293.5,371.6 294.1,371.6 294.7,371.6 295.3,371.5 295.9,371.5 296.5,371.5 297.1,371.4 297.7,371.4 298.2,371.4 298.8,371.3 299.4,371.3 300.0,371.2 300.6,371.2 301.2,371.1 301.8,371.1 302.4,371.0 303.0,371.0 303.6,370.9 304.1,370.9 304.7,370.8 305.3,370.8 305.9,370.7 306.5,370.6 307.1,370.6 307.7,370.5 308.3,370.4 308.9,370.3 309.5,370.3 310.0,370.2 310.6,370.1 311.2,370.0 311.8,369.9 312.4,369.8 313.0,369.7 313.6,369.6 314.2,369.5 314.8,369.3 315.4,369.2 315.9,369.1 316.5,368.9 317.1,368.8 317.7,368.6 318.3,368.4 318.9,368.3 319.5,368.1 320.1,367.9 320.7,367.7 321.3,367.4 321.8,367.2 322.4,367.0 323.0,366.7 323.6,366.4 324.2,366.1 324.8,365.8 325.4,365.4 326.0,365.1 326.6,364.7 327.2,364.2 327.7,363.8 328.3,363.3 328.9,362.7 329.5,362.2 330.1,361.5 330.7,360.9 331.3,360.1 331.9,359.3 332.5,358.5 333.1,357.5 333.6,356.5 334.2,355.4 334.8,354.1 335.4,352.8 336.0,351.3 336.6,349.6 337.2,347.8 337.8,345.8 338.4,343.6 339.0,341.2 339.5,338.5 340.1,335.6 340.7,332.4 341.3,328.9 341.9,325.0 342.5,320.9 343.1,316.6 343.7,312.0 344.3,307.3 344.9,302.6 345.4,298.1 346.0,294.0 346.6,290.4 347.2,287.7 347.8,286.0 348.4,285.5 349.0,286.2 349.6,288.0 350.2,290.8 350.8,294.4 351.3,298.6 351.9,303.1 352.5,307.8 353.1,312.5 353.7,317.1 354.3,321.4 354.9,325.5 355.5,329.3 356.1,332.7 356.7,335.9 357.2,338.8 357.8,341.5 358.4,343.9 359.0,346.1 359.6,348.0 360.2,349.8 360.8,351.4 361.4,352.9 362.0,354.3 362.6,355.5 363.1,356.6 363.7,357.6 364.3,358.6 364.9,359.4 365.5,360.2 366.1,360.9 366.7,361.6 367.3,362.2 367.9,362.8 368.5,363.3 369.0,363.8 369.6,364.3 370.2,364.7 370.8,365.1 371.4,365.5 372.0,365.8 372.6,366.1 373.2,366.4 373.8,366.7 374.4,367.0 374.9,367.2 375.5,367.5 376.1,367.7 376.7,367.9 377.3,368.1 377.9,368.3 378.5,368.5 379.1,368.6 379.7,368.8 380.3,368.9 380.8,369.1 381.4,369.2 382.0,369.4 382.6,369.5 383.2,369.6 383.8,369.7 384.4,369.8 385.0,369.9 385.6,370.0 386.2,370.1 386.7,370.2 387.3,370.3 387.9,370.4 388.5,370.4 389.1,370.5 389.7,370.6 390.3,370.6 390.9,370.7 391.5,370.8 392.1,370.8 392.6,370.9 393.2,371.0 393.8,371.0 394.4,371.1 395.0,371.1 395.6,371.2 396.2,371.2 396.8,371.3 397.4,371.3 398.0,371.3 398.5,371.4 399.1,371.4 399.7,371.5 400.3,371.5 400.9,371.5 401.5,371.6 402.1,371.6 402.7,371.6 403.3,371.7 403.9,371.7 404.4,371.7 405.0,371.7 405.6,371.8 406.2,371.8 406.8,371.8 407.4,371.9 408.0,371.9 408.6,371.9 409.2,371.9 409.8,371.9 410.3,372.0 410.9,372.0 411.5,372.0 412.1,372.0 412.7,372.0 413.3,372.1 413.9,372.1 414.5,372.1 415.1,372.1 415.7,372.1 416.2,372.2 416.8,372.2 417.4,372.2 418.0,372.2 418.6,372.2 419.2,372.2 419.8,372.2 420.4,372.3 421.0,372.3 421.6,372.3 422.1,372.3 422.7,372.3 423.3,372.3 423.9,372.3 424.5,372.4 425.1,372.4 425.7,372.4 426.3,372.4 426.9,372.4 427.5,372.4 428.0,372.4 428.6,372.4 429.2,372.4 429.8,372.4 430.4,372.5 431.0,372.5 431.6,372.5 432.2,372.5 432.8,372.5 433.4,372.5 433.9,372.5 434.5,372.5 435.1,372.5 435.7,372.5 436.3,372.5 436.9,372.5 437.5,372.6 438.1,372.6 438.7,372.6 439.3,372.6 439.8,372.6 440.4,372.6 441.0,372.6 441.6,372.6 442.2,372.6 442.8,372.6 443.4,372.6 444.0,372.6 444.6,372.6 445.2,372.6 445.7,372.6 446.3,372.7 446.9,372.7 447.5,372.7 448.1,372.7 448.7,372.7 449.3,372.7 449.9,372.7 450.5,372.7 451.1,372.7 451.6,372.7 452.2,372.7 452.8,372.7 453.4,372.7 454.0,372.7 454.6,372.7 455.2,372.7 455.8,372.7 456.4,372.7 457.0,372.7 457.5,372.7 458.1,372.7 458.7,372.8 459.3,372.8 459.9,372.8 460.5,372.8 461.1,372.8 461.7,372.8 462.3,372.8 462.9,372.8 463.4,372.8 464.0,372.8 464.6,372.8 465.2,372.8 465.8,372.8 466.4,372.8 467.0,372.8 467.6,372.8 468.2,372.8 468.8,372.8 469.3,372.8 469.9,372.8 470.5,372.8 471.1,372.8 471.7,372.8 472.3,372.8 472.9,372.8 473.5,372.8 474.1,372.8 474.7,372.8 475.2,372.8 475.8,372.8 476.4,372.8 477.0,372.8 477.6,372.9 478.2,372.9 478.8,372.9 479.4,372.9 480.0,372.9 480.6,372.9 481.1,372.9 481.7,372.9 482.3,372.9 482.9,372.9 483.5,372.9 484.1,372.9 484.7,372.9 485.3,372.9 485.9,372.9 486.5,372.9 487.0,372.9 487.6,372.9 488.2,372.9 488.8,372.9 489.4,372.9 490.0,372.9 490.6,372.9 491.2,372.9 491.8,372.9 492.4,372.9 492.9,372.9 493.5,372.9 494.1,372.9 494.7,372.9 495.3,372.9 495.9,372.9 496.5,372.9 497.1,372.9 497.7,372.9 498.3,372.9 498.8,372.9 499.4,372.9 500.0,372.9 500.6,372.9 501.2,372.9 501.8,372.9 501.8,373.1 212.7,373.1" fill="#e377c2" fill-opacity="0.3"/><polygon points="212.7,373.0 213.3,373.0 213.9,373.0 214.5,373.0 215.1,373.0 215.6,373.0 216.2,373.0 216.8,373.0 217.4,373.0 218.0,373.0 218.6,373.0 219.2,373.0 219.8,373.0 220.4,373.0 221.0,373.0 221.5,373.0 222.1,373.0 222.7,373.0 223.3,373.0 223.9,373.0 224.5,373.0 225.1,373.0 225.7,373.0 226.3,373.0 226.9,373.0 227.4,373.0 228.0,373.0 228.6,373.0 229.2,373.0 229.8,373.0 230.4,373.0 231.0,373.0 231.6,373.0 232.2,373.0 232.8,373.0 233.3,373.0 233.9,373.0 234.5,373.0 235.1,373.0 235.7,373.0 236.3,373.0 236.9,373.0 237.5,373.0 238.1,373.0 238.7,373.0 239.2,373.0 239.8,373.0 240.4,373.0 241.0,373.0 241.6,373.0 242.2,373.0 242.8,373.0 243.4,373.0 244.0,373.0 244.6,373.0 245.1,373.0 245.7,373.0 246.3,373.0 246.9,373.0 247.5,373.0 248.1,373.0 248.7,373.0 249.3,373.0 249.9,373.0 250.5,373.0 251.0,373.0 251.6,373.0 252.2,373.0 252.8,373.0 253.4,373.0 254.0,373.0 254.6,373.0 255.2,373.0 255.8,373.0 256.4,373.0 256.9,373.0 257.5,373.0 258.1,373.0 258.7,373.0 259.3,373.0 259.9,373.0 260.5,373.0 261.1,373.0 261.7,373.0 262.3,373.0 262.8,373.0 263.4,373.0 264.0,373.0 264.6,373.0 265.2,373.0 265.8,373.0 266.4,373.0 267.0,373.0 267.6,373.0 268.2,373.0 268.7,373.0 269.3,373.0 269.9,373.0 270.5,373.0 271.1,373.0 271.7,373.0 272.3,372.9 272.9,372.9 273.5,372.9 274.1,372.9 274.6,372.9 275.2,372.9 275.8,372.9 276.4,372.9 277.0,372.9 277.6,372.9 278.2,372.9 278.8,372.9 279.4,372.9 280.0,372.9 280.5,372.9 281.1,372.9 281.7,372.9 282.3,372.9 282.9,372.9 283.5,372.9 284.1,372.9 284.7,372.9 285.3,372.9 285.9,372.9 286.4,372.9 287.0,372.9 287.6,372.9 288.2,372.9 288.8,372.9 289.4,372.9 290.0,372.9 290.6,372.9 291.2,372.9 291.8,372.9 292.3,372.9 292.9,372.9 293.5,372.9 294.1,372.9 294.7,372.9 295.3,372.9 295.9,372.9 296.5,372.9 297.1,372.9 297.7,372.8 298.2,372.8 298.8,372.8 299.4,372.8 300.0,372.8 300.6,372.8 301.2,372.8 301.8,372.8 302.4,372.8 303.0,372.8 303.6,372.8 304.1,372.8 304.7,372.8 305.3,372.8 305.9,372.8 306.5,372.8 307.1,372.8 307.7,372.8 308.3,372.8 308.9,372.8 309.5,372.8 310.0,372.8 310.6,372.7 311.2,372.7 311.8,372.7 312.4,372.7 313.0,372.7 313.6,372.7 314.2,372.7 314.8,372.7 315.4,372.7 315.9,372.7 316.5,372.7 317.1,372.7 317.7,372.7 318.3,372.7 318.9,372.6 319.5,372.6 320.1,372.6 320.7,372.6 321.3,372.6 321.8,372.6 322.4,372.6 323.0,372.6 323.6,372.6 324.2,372.5 324.8,372.5 325.4,372.5 326.0,372.5 326.6,372.5 327.2,372.5 327.7,372.5 328.3,372.5 328.9,372.4 329.5,372.4 330.1,372.4 330.7,372.4 331.3,372.4 331.9,372.3 332.5,372.3 333.1,372.3 333.6,372.3 334.2,372.3 334.8,372.2 335.4,372.2 336.0,372.2 336.6,372.2 337.2,372.1 337.8,372.1 338.4,372.1 339.0,372.0 339.5,372.0 340.1,372.0 340.7,371.9 341.3,371.9 341.9,371.9 342.5,371.8 343.1,371.8 343.7,371.7 344.3,371.7 344.9,371.6 345.4,371.6 346.0,371.5 346.6,371.5 347.2,371.4 347.8,371.3 348.4,371.3 349.0,371.2 349.6,371.1 350.2,371.0 350.8,370.9 351.3,370.8 351.9,370.7 352.5,370.6 353.1,370.5 353.7,370.3 354.3,370.2 354.9,370.0 355.5,369.9 356.1,369.7 356.7,369.5 357.2,369.3 357.8,369.1 358.4,368.8 359.0,368.5 359.6,368.2 360.2,367.9 360.8,367.5 361.4,367.1 362.0,366.7 362.6,366.2 363.1,365.6 363.7,365.0 364.3,364.3 364.9,363.4 365.5,362.5 366.1,361.5 366.7,360.2 367.3,358.8 367.9,357.1 368.5,355.2 369.0,352.9 369.6,350.2 370.2,346.9 370.8,342.9 371.4,338.1 372.0,332.2 372.6,325.0 373.2,316.3 373.8,305.8 374.4,293.5 374.9,279.8 375.5,265.9 376.1,253.9 376.7,246.6 377.3,246.1 377.9,252.5 378.5,264.0 379.1,277.8 379.7,291.6 380.3,304.1 380.8,314.9 381.4,323.9 382.0,331.3 382.6,337.3 383.2,342.3 383.8,346.3 384.4,349.7 385.0,352.5 385.6,354.9 386.2,356.9 386.7,358.6 387.3,360.0 387.9,361.3 388.5,362.4 389.1,363.3 389.7,364.2 390.3,364.9 390.9,365.5 391.5,366.1 392.1,366.6 392.6,367.1 393.2,367.5 393.8,367.9 394.4,368.2 395.0,368.5 395.6,368.8 396.2,369.0 396.8,369.3 397.4,369.5 398.0,369.7 398.5,369.9 399.1,370.0 399.7,370.2 400.3,370.3 400.9,370.5 401.5,370.6 402.1,370.7 402.7,370.8 403.3,370.9 403.9,371.0 404.4,371.1 405.0,371.2 405.6,371.2 406.2,371.3 406.8,371.4 407.4,371.5 408.0,371.5 408.6,371.6 409.2,371.6 409.8,371.7 410.3,371.7 410.9,371.8 411.5,371.8 412.1,371.9 412.7,371.9 413.3,371.9 413.9,372.0 414.5,372.0 415.1,372.1 415.7,372.1 416.2,372.1 416.8,372.1 417.4,372.2 418.0,372.2 418.6,372.2 419.2,372.2 419.8,372.3 420.4,372.3 421.0,372.3 421.6,372.3 422.1,372.4 422.7,372.4 423.3,372.4 423.9,372.4 424.5,372.4 425.1,372.4 425.7,372.5 426.3,372.5 426.9,372.5 427.5,372.5 428.0,372.5 428.6,372.5 429.2,372.5 429.8,372.6 430.4,372.6 431.0,372.6 431.6,372.6 432.2,372.6 432.8,372.6 433.4,372.6 433.9,372.6 434.5,372.6 435.1,372.7 435.7,372.7 436.3,372.7 436.9,372.7 437.5,372.7 438.1,372.7 438.7,372.7 439.3,372.7 439.8,372.7 440.4,372.7 441.0,372.7 441.6,372.7 442.2,372.8 442.8,372.8 443.4,372.8 444.0,372.8 444.6,372.8 445.2,372.8 445.7,372.8 446.3,372.8 446.9,372.8 447.5,372.8 448.1,372.8 448.7,372.8 449.3,372.8 449.9,372.8 450.5,372.8 451.1,372.8 451.6,372.8 452.2,372.8 452.8,372.8 453.4,372.9 454.0,372.9 454.6,372.9 455.2,372.9 455.8,372.9 456.4,372.9 457.0,372.9 457.5,372.9 458.1,372.9 458.7,372.9 459.3,372.9 459.9,372.9 460.5,372.9 461.1,372.9 461.7,372.9 462.3,372.9 462.9,372.9 463.4,372.9 464.0,372.9 464.6,372.9 465.2,372.9 465.8,372.9 466.4,372.9 467.0,372.9 467.6,372.9 468.2,372.9 468.8,372.9 469.3,372.9 469.9,372.9 470.5,372.9 471.1,372.9 471.7,372.9 472.3,372.9 472.9,372.9 473.5,373.0 474.1,373.0 474.7,373.0 475.2,373.0 475.8,373.0 476.4,373.0 477.0,373.0 477.6,373.0 478.2,373.0 478.8,373.0 479.4,373.0 480.0,373.0 480.6,373.0 481.1,373.0 481.7,373.0 482.3,373.0 482.9,373.0 483.5,373.0 484.1,373.0 484.7,373.0 485.3,373.0 485.9,373.0 486.5,373.0 487.0,373.0 487.6,373.0 488.2,373.0 488.8,373.0 489.4,373.0 490.0,373.0 490.6,373.0 491.2,373.0 491.8,373.0 492.4,373.0 492.9,373.0 493.5,373.0 494.1,373.0 494.7,373.0 495.3,373.0 495.9,373.0 496.5,373.0 497.1,373.0 497.7,373.0 498.3,373.0 498.8,373.0 499.4,373.0 500.0,373.0 500.6,373.0 501.2,373.0 501.8,373.0 501.8,373.1 212.7,373.1" fill="#e377c2" fill-opacity="0.3"/><polygon points="212.7,373.1 213.3,373.1 213.9,373.1 214.5,373.1 215.1,373.1 215.6,373.1 216.2,373.1 216.8,373.1 217.4,373.1 218.0,373.1 218.6,373.1 219.2,373.1 219.8,373.1 220.4,373.1 221.0,373.1 221.5,373.1 222.1,373.1 222.7,373.1 223.3,373.1 223.9,373.1 224.5,373.1 225.1,373.1 225.7,373.1 226.3,373.1 226.9,373.1 227.4,373.1 228.0,373.1 228.6,373.1 229.2,373.1 229.8,373.1 230.4,373.1 231.0,373.1 231.6,373.1 232.2,373.1 232.8,373.1 233.3,373.1 233.9,373.1 234.5,373.1 235.1,373.1 235.7,373.1 236.3,373.1 236.9,373.1 237.5,373.1 238.1,373.1 238.7,373.1 239.2,373.1 239.8,373.1 240.4,373.1 241.0,373.1 241.6,373.1 242.2,373.1 242.8,373.1 243.4,373.1 244.0,373.1 244.6,373.1 245.1,373.1 245.7,373.1 246.3,373.1 246.9,373.1 247.5,373.1 248.1,373.1 248.7,373.1 249.3,373.1 249.9,373.1 250.5,373.1 251.0,373.1 251.6,373.1 252.2,373.1 252.8,373.1 253.4,373.1 254.0,373.1 254.6,373.1 255.2,373.1 255.8,373.1 256.4,373.1 256.9,373.1 257.5,373.1 258.1,373.1 258.7,373.1 259.3,373.1 259.9,373.1 260.5,373.1 261.1,373.1 261.7,373.1 262.3,373.1 262.8,373.1 263.4,373.1 264.0,373.1 264.6,373.1 265.2,373.1 265.8,373.1 266.4,373.1 267.0,373.1 267.6,373.1 268.2,373.1 268.7,373.1 269.3,373.1 269.9,373.1 270.5,373.1 271.1,373.1 271.7,373.1 272.3,373.1 272.9,373.1 273.5,373.1 274.1,373.1 274.6,373.1 275.2,373.1 275.8,373.1 276.4,373.1 277.0,373.1 277.6,373.1 278.2,373.1 278.8,373.1 279.4,373.1 280.0,373.1 280.5,373.1 281.1,373.1 281.7,373.1 282.3,373.1 282.9,373.1 283.5,373.1 284.1,373.1 284.7,373.1 285.3,373.1 285.9,373.1 286.4,373.1 287.0,373.1 287.6,373.1 288.2,373.1 288.8,373.1 289.4,373.1 290.0,373.1 290.6,373.1 291.2,373.1 291.8,373.1 292.3,373.1 292.9,373.1 293.5,373.1 294.1,373.1 294.7,373.1 295.3,373.1 295.9,373.1 296.5,373.1 297.1,373.1 297.7,373.1 298.2,373.1 298.8,373.1 299.4,373.1 300.0,373.1 300.6,373.1 301.2,373.1 301.8,373.1 302.4,373.1 303.0,373.1 303.6,373.1 304.1,373.1 304.7,373.1 305.3,373.1 305.9,373.1 306.5,373.1 307.1,373.1 307.7,373.1 308.3,373.1 308.9,373.1 309.5,373.1 310.0,373.1 310.6,373.1 311.2,373.1 311.8,373.1 312.4,373.1 313.0,373.1 313.6,373.1 314.2,373.1 314.8,373.1 315.4,373.1 315.9,373.1 316.5,373.1 317.1,373.1 317.7,373.1 318.3,373.1 318.9,373.1 319.5,373.1 320.1,373.1 320.7,373.1 321.3,373.1 321.8,373.1 322.4,373.1 323.0,373.1 323.6,373.1 324.2,373.1 324.8,373.1 325.4,373.1 326.0,373.1 326.6,373.1 327.2,373.1 327.7,373.1 328.3,373.1 328.9,373.1 329.5,373.1 330.1,373.1 330.7,373.1 331.3,373.1 331.9,373.1 332.5,373.1 333.1,373.1 333.6,373.1 334.2,373.1 334.8,373.1 335.4,373.1 336.0,373.1 336.6,373.1 337.2,373.1 337.8,373.1 338.4,373.1 339.0,373.1 339.5,373.1 340.1,373.1 340.7,373.1 341.3,373.1 341.9,373.1 342.5,373.1 343.1,373.1 343.7,373.1 344.3,373.1 344.9,373.1 345.4,373.1 346.0,373.1 346.6,373.1 347.2,373.1 347.8,373.1 348.4,373.1 349.0,373.1 349.6,373.1 350.2,373.1 350.8,373.1 351.3,373.1 351.9,373.1 352.5,373.1 353.1,373.1 353.7,373.1 354.3,373.1 354.9,373.1 355.5,373.1 356.1,373.1 356.7,373.1 357.2,373.1 357.8,373.1 358.4,373.1 359.0,373.1 359.6,373.1 360.2,373.1 360.8,373.1 361.4,373.1 362.0,373.1 362.6,373.1 363.1,373.1 363.7,373.1 364.3,373.1 364.9,373.1 365.5,373.1 366.1,373.1 366.7,373.1 367.3,373.1 367.9,373.1 368.5,373.1 369.0,373.1 369.6,373.1 370.2,373.1 370.8,373.1 371.4,373.1 372.0,373.1 372.6,373.1 373.2,373.1 373.8,373.1 374.4,373.1 374.9,373.1 375.5,373.1 376.1,373.1 376.7,373.1 377.3,373.1 377.9,373.1 378.5,373.1 379.1,373.1 379.7,373.1 380.3,373.1 380.8,373.1 381.4,373.1 382.0,373.1 382.6,373.1 383.2,373.1 383.8,373.1 384.4,373.1 385.0,373.1 385.6,373.1 386.2,373.1 386.7,373.1 387.3,373.1 387.9,373.1 388.5,373.1 389.1,373.1 389.7,373.1 390.3,373.1 390.9,373.1 391.5,373.1 392.1,373.1 392.6,373.1 393.2,373.1 393.8,373.1 394.4,373.1 395.0,373.1 395.6,373.0 396.2,373.0 396.8,373.0 397.4,373.0 398.0,373.0 398.5,373.0 399.1,373.0 399.7,373.0 400.3,373.0 400.9,372.9 401.5,372.9 402.1,372.9 402.7,372.9 403.3,372.8 403.9,372.7 404.4,372.6 405.0,372.5 405.6,372.3 406.2,372.0 406.8,371.5 407.4,370.7 408.0,369.4 408.6,367.7 409.2,367.0 409.8,368.4 410.3,370.0 410.9,371.1 411.5,371.8 412.1,372.2 412.7,372.4 413.3,372.6 413.9,372.7 414.5,372.8 415.1,372.8 415.7,372.9 416.2,372.9 416.8,372.9 417.4,373.0 418.0,373.0 418.6,373.0 419.2,373.0 419.8,373.0 420.4,373.0 421.0,373.0 421.6,373.0 422.1,373.0 422.7,373.1 423.3,373.1 423.9,373.1 424.5,373.1 425.1,373.1 425.7,373.1 426.3,373.1 426.9,373.1 427.5,373.1 428.0,373.1 428.6,373.1 429.2,373.1 429.8,373.1 430.4,373.1 431.0,373.1 431.6,373.1 432.2,373.1 432.8,373.1 433.4,373.1 433.9,373.1 434.5,373.1 435.1,373.1 435.7,373.1 436.3,373.1 436.9,373.1 437.5,373.1 438.1,373.1 438.7,373.1 439.3,373.1 439.8,373.1 440.4,373.1 441.0,373.1 441.6,373.1 442.2,373.1 442.8,373.1 443.4,373.1 444.0,373.1 444.6,373.1 445.2,373.1 445.7,373.1 446.3,373.1 446.9,373.1 447.5,373.1 448.1,373.1 448.7,373.1 449.3,373.1 449.9,373.1 450.5,373.1 451.1,373.1 451.6,373.1 452.2,373.1 452.8,373.1 453.4,373.1 454.0,373.1 454.6,373.1 455.2,373.1 455.8,373.1 456.4,373.1 457.0,373.1 457.5,373.1 458.1,373.1 458.7,373.1 459.3,373.1 459.9,373.1 460.5,373.1 461.1,373.1 461.7,373.1 462.3,373.1 462.9,373.1 463.4,373.1 464.0,373.1 464.6,373.1 465.2,373.1 465.8,373.1 466.4,373.1 467.0,373.1 467.6,373.1 468.2,373.1 468.8,373.1 469.3,373.1 469.9,373.1 470.5,373.1 471.1,373.1 471.7,373.1 472.3,373.1 472.9,373.1 473.5,373.1 474.1,373.1 474.7,373.1 475.2,373.1 475.8,373.1 476.4,373.1 477.0,373.1 477.6,373.1 478.2,373.1 478.8,373.1 479.4,373.1 480.0,373.1 480.6,373.1 481.1,373.1 481.7,373.1 482.3,373.1 482.9,373.1 483.5,373.1 484.1,373.1 484.7,373.1 485.3,373.1 485.9,373.1 486.5,373.1 487.0,373.1 487.6,373.1 488.2,373.1 488.8,373.1 489.4,373.1 490.0,373.1 490.6,373.1 491.2,373.1 491.8,373.1 492.4,373.1 492.9,373.1 493.5,373.1 494.1,373.1 494.7,373.1 495.3,373.1 495.9,373.1 496.5,373.1 497.1,373.1 497.7,373.1 498.3,373.1 498.8,373.1 499.4,373.1 500.0,373.1 500.6,373.1 501.2,373.1 501.8,373.1 501.8,373.1 212.7,373.1" fill="#e377c2" fill-opacity="0.3"/><text x="276.28" y="368.26" font-size="5.2" text-anchor="middle" fill="#3a3a3a">Peak #1</text><text x="276.28" y="374.41" font-size="5.2" text-anchor="middle" fill="#3a3a3a">A=2529.81±712.24</text><text x="276.28" y="380.56" font-size="5.2" text-anchor="middle" fill="#3a3a3a">x0=2736.53±4.29 cm-1</text><text x="276.28" y="386.71" font-size="5.2" text-anchor="middle" fill="#3a3a3a">width=21.19±7.16 cm-1</text><text x="320.00" y="299.91" font-size="5.2" text-anchor="middle" fill="#3a3a3a">Peak #2</text><text x="320.00" y="306.06" font-size="5.2" text-anchor="middle" fill="#3a3a3a">A=12670.62±2054.74</text><text x="320.00" y="312.21" font-size="5.2" text-anchor="middle" fill="#3a3a3a">x0=2884.75±0.47 cm-1</text><text x="320.00" y="318.36" font-size="5.2" text-anchor="middle" fill="#3a3a3a">width=12.03±1.10 cm-1</text><text x="331.24" y="278.96" font-size="5.2" text-anchor="middle" fill="#3a3a3a">Peak #3</text><text x="331.24" y="285.11" font-size="5.2" text-anchor="middle" fill="#3a3a3a">A=32109.52±5096.67</text><text x="331.24" y="291.26" font-size="5.2" text-anchor="middle" fill="#3a3a3a">x0=2922.86±1.25 cm-1</text><text x="331.24" y="297.41" font-size="5.2" text-anchor="middle" fill="#3a3a3a">width=23.98±2.59 cm-1</text><text x="338.60" y="218.11" font-size="5.2" text-anchor="middle" fill="#3a3a3a">Peak #4</text><text x="338.60" y="224.26" font-size="5.2" text-anchor="middle" fill="#3a3a3a">A=21210.72±2204.13</text><text x="338.60" y="230.41" font-size="5.2" text-anchor="middle" fill="#3a3a3a">x0=2947.80±0.25 cm-1</text><text x="338.60" y="236.56" font-size="5.2" text-anchor="middle" fill="#3a3a3a">width=9.77±0.63 cm-1</text><text x="348.36" y="289.41" font-size="5.2" text-anchor="middle" fill="#3a3a3a">Peak #5</text><text x="348.36" y="295.56" font-size="5.2" text-anchor="middle" fill="#3a3a3a">A=28876.12±1013.11</text><text x="348.36" y="301.71" font-size="5.2" text-anchor="middle" fill="#3a3a3a">x0=2980.89±3.03 cm-1</text><text x="348.36" y="307.86" font-size="5.2" text-anchor="middle" fill="#3a3a3a">width=24.13±1.19 cm-1</text><text x="377.05" y="249.29" font-size="5.2" text-anchor="middle" fill="#3a3a3a">Peak #6</text><text x="377.05" y="255.44" font-size="5.2" text-anchor="middle" fill="#3a3a3a">A=20527.40±450.31</text><text x="377.05" y="261.59" font-size="5.2" text-anchor="middle" fill="#3a3a3a">x0=3078.14±0.21 cm-1</text><text x="377.05" y="267.74" font-size="5.2" text-anchor="middle" fill="#3a3a3a">width=11.77±0.33 cm-1</text><text x="409.04" y="370.88" font-size="5.2" text-anchor="middle" fill="#3a3a3a">Peak #7</text><text x="409.04" y="377.03" font-size="5.2" text-anchor="middle" fill="#3a3a3a">A=373.76±240.38</text><text x="409.04" y="383.18" font-size="5.2" text-anchor="middle" fill="#3a3a3a">x0=3186.57±2.79 cm-1</text><text x="409.04" y="389.33" font-size="5.2" text-anchor="middle" fill="#3a3a3a">width=4.47±4.06 cm-1</text><polyline points="212.7,376.4 215.2,370.8 217.7,368.7 220.2,373.8 222.7,376.6 225.2,372.2 227.7,370.2 230.2,368.0 232.8,375.9 235.3,376.1 237.8,369.2 240.3,369.9 242.8,366.1 245.3,367.9 247.8,371.5 250.3,371.9 252.8,361.9 255.3,371.5 257.8,372.9 260.3,373.7 262.8,368.9 265.4,368.0 267.9,368.5 270.4,365.8 272.9,362.3 275.4,358.8 277.9,357.5 280.4,362.3 282.9,370.8 285.4,363.0 287.9,370.6 290.4,366.2 292.9,370.3 295.4,364.5 297.9,366.2 300.5,361.4 303.0,348.9 305.5,357.8 308.0,351.0 310.5,352.8 313.0,339.5 315.5,317.8 318.0,284.7 320.5,256.7 323.0,274.0 325.5,278.9 328.0,255.9 330.5,240.0 333.1,219.0 335.6,202.6 338.1,128.9 340.6,185.9 343.1,237.9 345.6,253.8 348.1,251.0 350.6,270.4 353.1,289.3 355.6,311.9 358.1,327.6 360.6,339.6 363.1,339.1 365.7,341.7 368.2,335.1 370.7,332.4 373.2,303.5 375.7,251.5 378.2,248.8 380.7,304.6 383.2,335.4 385.7,351.9 388.2,360.4 390.7,362.2 393.2,361.3 395.7,359.9 398.2,362.9 400.8,363.5 403.3,365.1 405.8,365.4 408.3,363.9 410.8,364.6 413.3,363.2 415.8,371.0 418.3,372.6 420.8,363.7 423.3,369.9 425.8,367.5 428.3,368.0 430.8,375.1 433.4,362.9 435.9,365.3 438.4,370.9 440.9,369.0 443.4,371.4 445.9,373.4 448.4,372.0 450.9,371.2 453.4,369.9 455.9,370.7 458.4,371.9 460.9,369.6 463.4,373.6 466.0,370.7 468.5,370.2 471.0,372.8 473.5,375.6 476.0,374.0 478.5,371.9 481.0,371.4 483.5,369.6 486.0,374.3 488.5,372.5 491.0,371.3 493.5,372.8 496.0,376.9 498.6,371.1 501.1,368.3 502.1,370.7" fill="none" stroke="#1f77b4" stroke-width="1.1" stroke-linejoin="round"/><polyline points="212.7,372.2 213.1,372.2 213.6,372.2 214.0,372.2 214.5,372.2 214.9,372.1 215.3,372.1 215.8,372.1 216.2,372.1 216.7,372.1 217.1,372.1 217.6,372.1 218.0,372.1 218.4,372.1 218.9,372.1 219.3,372.1 219.8,372.1 220.2,372.1 220.7,372.0 221.1,372.0 221.5,372.0 222.0,372.0 222.4,372.0 222.9,372.0 223.3,372.0 223.8,372.0 224.2,372.0 224.6,372.0 225.1,372.0 225.5,371.9 226.0,371.9 226.4,371.9 226.9,371.9 227.3,371.9 227.7,371.9 228.2,371.9 228.6,371.9 229.1,371.9 229.5,371.8 230.0,371.8 230.4,371.8 230.8,371.8 231.3,371.8 231.7,371.8 232.2,371.8 232.6,371.8 233.1,371.7 233.5,371.7 233.9,371.7 234.4,371.7 234.8,371.7 235.3,371.7 235.7,371.7 236.1,371.6 236.6,371.6 237.0,371.6 237.5,371.6 237.9,371.6 238.4,371.6 238.8,371.5 239.2,371.5 239.7,371.5 240.1,371.5 240.6,371.5 241.0,371.5 241.5,371.4 241.9,371.4 242.3,371.4 242.8,371.4 243.2,371.4 243.7,371.3 244.1,371.3 244.6,371.3 245.0,371.3 245.4,371.2 245.9,371.2 246.3,371.2 246.8,371.2 247.2,371.1 247.7,371.1 248.1,371.1 248.5,371.1 249.0,371.0 249.4,371.0 249.9,371.0 250.3,370.9 250.8,370.9 251.2,370.9 251.6,370.8 252.1,370.8 252.5,370.8 253.0,370.7 253.4,370.7 253.8,370.6 254.3,370.6 254.7,370.6 255.2,370.5 255.6,370.5 256.1,370.4 256.5,370.4 256.9,370.3 257.4,370.2 257.8,370.2 258.3,370.1 258.7,370.1 259.2,370.0 259.6,369.9 260.0,369.8 260.5,369.8 260.9,369.7 261.4,369.6 261.8,369.5 262.3,369.4 262.7,369.3 263.1,369.2 263.6,369.0 264.0,368.9 264.5,368.8 264.9,368.6 265.4,368.5 265.8,368.3 266.2,368.1 266.7,367.9 267.1,367.7 267.6,367.5 268.0,367.3 268.4,367.0 268.9,366.7 269.3,366.4 269.8,366.1 270.2,365.8 270.7,365.4 271.1,365.0 271.5,364.6 272.0,364.2 272.4,363.7 272.9,363.3 273.3,362.8 273.8,362.4 274.2,362.0 274.6,361.6 275.1,361.3 275.5,361.1 276.0,361.0 276.4,360.9 276.9,360.9 277.3,361.0 277.7,361.2 278.2,361.4 278.6,361.7 279.1,362.0 279.5,362.3 280.0,362.7 280.4,363.0 280.8,363.3 281.3,363.7 281.7,363.9 282.2,364.2 282.6,364.4 283.1,364.7 283.5,364.9 283.9,365.0 284.4,365.2 284.8,365.3 285.3,365.4 285.7,365.5 286.1,365.6 286.6,365.7 287.0,365.7 287.5,365.7 287.9,365.8 288.4,365.8 288.8,365.8 289.2,365.7 289.7,365.7 290.1,365.7 290.6,365.6 291.0,365.6 291.5,365.5 291.9,365.4 292.3,365.3 292.8,365.2 293.2,365.1 293.7,365.0 294.1,364.9 294.6,364.8 295.0,364.6 295.4,364.5 295.9,364.3 296.3,364.2 296.8,364.0 297.2,363.8 297.7,363.6 298.1,363.4 298.5,363.2 299.0,363.0 299.4,362.7 299.9,362.5 300.3,362.2 300.8,361.9 301.2,361.6 301.6,361.3 302.1,361.0 302.5,360.6 303.0,360.2 303.4,359.8 303.9,359.4 304.3,359.0 304.7,358.5 305.2,358.0 305.6,357.5 306.1,356.9 306.5,356.3 306.9,355.6 307.4,354.9 307.8,354.2 308.3,353.4 308.7,352.5 309.2,351.6 309.6,350.5 310.0,349.4 310.5,348.2 310.9,346.9 311.4,345.4 311.8,343.8 312.3,342.0 312.7,340.0 313.1,337.7 313.6,335.2 314.0,332.4 314.5,329.2 314.9,325.6 315.4,321.5 315.8,316.9 316.2,311.6 316.7,305.7 317.1,299.1 317.6,291.9 318.0,284.4 318.5,276.8 318.9,269.8 319.3,263.9 319.8,259.9 320.2,258.0 320.7,258.2 321.1,260.3 321.6,263.4 322.0,267.0 322.4,270.5 322.9,273.5 323.3,275.8 323.8,277.3 324.2,277.9 324.6,277.8 325.1,276.9 325.5,275.4 326.0,273.3 326.4,270.6 326.9,267.6 327.3,264.1 327.7,260.4 328.2,256.5 328.6,252.6 329.1,248.6 329.5,244.9 330.0,241.4 330.4,238.2 330.8,235.4 331.3,232.9 331.7,230.8 332.2,229.0 332.6,227.3 333.1,225.5 333.5,223.4 333.9,220.7 334.4,217.2 334.8,212.4 335.3,206.1 335.7,198.0 336.2,187.8 336.6,175.8 337.0,162.6 337.5,149.5 337.9,138.9 338.4,133.2 338.8,134.2 339.2,142.0 339.7,154.9 340.1,170.2 340.6,185.9 341.0,200.3 341.5,212.8 341.9,223.1 342.3,231.4 342.8,237.8 343.2,242.6 343.7,246.1 344.1,248.5 344.6,250.1 345.0,251.1 345.4,251.6 345.9,251.8 346.3,252.0 346.8,252.2 347.2,252.6 347.7,253.3 348.1,254.5 348.5,256.1 349.0,258.2 349.4,260.9 349.9,264.0 350.3,267.5 350.8,271.3 351.2,275.3 351.6,279.5 352.1,283.8 352.5,288.1 353.0,292.2 353.4,296.3 353.9,300.2 354.3,304.0 354.7,307.5 355.2,310.9 355.6,314.0 356.1,317.0 356.5,319.7 356.9,322.2 357.4,324.6 357.8,326.7 358.3,328.7 358.7,330.6 359.2,332.3 359.6,333.8 360.0,335.2 360.5,336.5 360.9,337.7 361.4,338.7 361.8,339.6 362.3,340.5 362.7,341.2 363.1,341.8 363.6,342.3 364.0,342.7 364.5,343.0 364.9,343.2 365.4,343.3 365.8,343.3 366.2,343.1 366.7,342.8 367.1,342.4 367.6,341.8 368.0,341.0 368.5,340.1 368.9,338.9 369.3,337.4 369.8,335.7 370.2,333.6 370.7,331.1 371.1,328.1 371.6,324.6 372.0,320.5 372.4,315.5 372.9,309.8 373.3,303.1 373.8,295.3 374.2,286.5 374.6,276.8 375.1,266.6 375.5,256.5 376.0,247.4 376.4,240.6 376.9,237.1 377.3,237.6 377.7,242.1 378.2,249.7 378.6,259.5 379.1,270.1 379.5,280.7 380.0,290.7 380.4,299.8 380.8,307.9 381.3,314.9 381.7,321.0 382.2,326.3 382.6,330.9 383.1,334.8 383.5,338.3 383.9,341.2 384.4,343.8 384.8,346.1 385.3,348.1 385.7,349.9 386.2,351.4 386.6,352.8 387.0,354.1 387.5,355.2 387.9,356.2 388.4,357.2 388.8,358.0 389.3,358.8 389.7,359.5 390.1,360.1 390.6,360.7 391.0,361.2 391.5,361.7 391.9,362.2 392.4,362.6 392.8,363.0 393.2,363.4 393.7,363.7 394.1,364.1 394.6,364.4 395.0,364.7 395.4,364.9 395.9,365.2 396.3,365.4 396.8,365.6 397.2,365.9 397.7,366.1 398.1,366.2 398.5,366.4 399.0,366.6 399.4,366.7 399.9,366.9 400.3,367.0 400.8,367.2 401.2,367.3 401.6,367.4 402.1,367.5 402.5,367.6 403.0,367.7 403.4,367.8 403.9,367.8 404.3,367.9 404.7,367.9 405.2,367.9 405.6,367.8 406.1,367.7 406.5,367.5 407.0,367.1 407.4,366.5 407.8,365.7 408.3,364.5 408.7,363.4 409.2,363.2 409.6,364.2 410.0,365.5 410.5,366.7 410.9,367.5 411.4,368.1 411.8,368.5 412.3,368.8 412.7,369.0 413.1,369.2 413.6,369.4 414.0,369.5 414.5,369.6 414.9,369.7 415.4,369.8 415.8,369.9 416.2,369.9 416.7,370.0 417.1,370.1 417.6,370.1 418.0,370.2 418.5,370.2 418.9,370.3 419.3,370.3 419.8,370.4 420.2,370.4 420.7,370.5 421.1,370.5 421.6,370.5 422.0,370.6 422.4,370.6 422.9,370.7 423.3,370.7 423.8,370.7 424.2,370.8 424.7,370.8 425.1,370.8 425.5,370.9 426.0,370.9 426.4,370.9 426.9,370.9 427.3,371.0 427.8,371.0 428.2,371.0 428.6,371.0 429.1,371.1 429.5,371.1 430.0,371.1 430.4,371.1 430.8,371.2 431.3,371.2 431.7,371.2 432.2,371.2 432.6,371.3 433.1,371.3 433.5,371.3 433.9,371.3 434.4,371.3 434.8,371.4 435.3,371.4 435.7,371.4 436.2,371.4 436.6,371.4 437.0,371.5 437.5,371.5 437.9,371.5 438.4,371.5 438.8,371.5 439.3,371.5 439.7,371.6 440.1,371.6 440.6,371.6 441.0,371.6 441.5,371.6 441.9,371.6 442.4,371.6 442.8,371.7 443.2,371.7 443.7,371.7 444.1,371.7 444.6,371.7 445.0,371.7 445.4,371.7 445.9,371.8 446.3,371.8 446.8,371.8 447.2,371.8 447.7,371.8 448.1,371.8 448.5,371.8 449.0,371.8 449.4,371.9 449.9,371.9 450.3,371.9 450.8,371.9 451.2,371.9 451.6,371.9 452.1,371.9 452.5,371.9 453.0,371.9 453.4,372.0 453.9,372.0 454.3,372.0 454.7,372.0 455.2,372.0 455.6,372.0 456.1,372.0 456.5,372.0 457.0,372.0 457.4,372.0 457.8,372.0 458.3,372.1 458.7,372.1 459.2,372.1 459.6,372.1 460.1,372.1 460.5,372.1 460.9,372.1 461.4,372.1 461.8,372.1 462.3,372.1 462.7,372.1 463.1,372.1 463.6,372.2 464.0,372.2 464.5,372.2 464.9,372.2 465.4,372.2 465.8,372.2 466.2,372.2 466.7,372.2 467.1,372.2 467.6,372.2 468.0,372.2 468.5,372.2 468.9,372.2 469.3,372.2 469.8,372.3 470.2,372.3 470.7,372.3 471.1,372.3 471.6,372.3 472.0,372.3 472.4,372.3 472.9,372.3 473.3,372.3 473.8,372.3 474.2,372.3 474.7,372.3 475.1,372.3 475.5,372.3 476.0,372.3 476.4,372.3 476.9,372.3 477.3,372.4 477.8,372.4 478.2,372.4 478.6,372.4 479.1,372.4 479.5,372.4 480.0,372.4 480.4,372.4 480.9,372.4 481.3,372.4 481.7,372.4 482.2,372.4 482.6,372.4 483.1,372.4 483.5,372.4 483.9,372.4 484.4,372.4 484.8,372.4 485.3,372.4 485.7,372.4 486.2,372.4 486.6,372.5 487.0,372.5 487.5,372.5 487.9,372.5 488.4,372.5 488.8,372.5 489.3,372.5 489.7,372.5 490.1,372.5 490.6,372.5 491.0,372.5 491.5,372.5 491.9,372.5 492.4,372.5 492.8,372.5 493.2,372.5 493.7,372.5 494.1,372.5 494.6,372.5 495.0,372.5 495.5,372.5 495.9,372.5 496.3,372.5 496.8,372.5 497.2,372.5 497.7,372.5 498.1,372.6 498.6,372.6 499.0,372.6 499.4,372.6 499.9,372.6 500.3,372.6 500.8,372.6 501.2,372.6 501.6,372.6 502.1,372.6" fill="none" stroke="#ff7f0e" stroke-width="1.45" stroke-linejoin="round"/></g><rect x="197.9" y="115.5" width="319.6" height="275.6" fill="none" stroke="#3a3a3a" stroke-width="0.9"/><line x1="236.00" y1="391" x2="236.00" y2="394" stroke="#333" stroke-width="0.7"/><text x="236.00" y="404.3" font-size="9" text-anchor="middle" fill="#333">2600</text><line x1="295.00" y1="391" x2="295.00" y2="394" stroke="#333" stroke-width="0.7"/><text x="295.00" y="404.3" font-size="9" text-anchor="middle" fill="#333">2800</text><line x1="354.00" y1="391" x2="354.00" y2="394" stroke="#333" stroke-width="0.7"/><text x="354.00" y="404.3" font-size="9" text-anchor="middle" fill="#333">3000</text><line x1="413.00" y1="391" x2="413.00" y2="394" stroke="#333" stroke-width="0.7"/><text x="413.00" y="404.3" font-size="9" text-anchor="middle" fill="#333">3200</text><line x1="472.00" y1="391" x2="472.00" y2="394" stroke="#333" stroke-width="0.7"/><text x="472.00" y="404.3" font-size="9" text-anchor="middle" fill="#333">3400</text><line x1="195" y1="373.20" x2="198" y2="373.20" stroke="#333" stroke-width="0.7"/><text x="192.3" y="376.10" font-size="9.2" text-anchor="end" fill="#333">6000</text><line x1="195" y1="327.20" x2="198" y2="327.20" stroke="#333" stroke-width="0.7"/><text x="192.3" y="330.10" font-size="9.2" text-anchor="end" fill="#333">6200</text><line x1="195" y1="281.20" x2="198" y2="281.20" stroke="#333" stroke-width="0.7"/><text x="192.3" y="284.10" font-size="9.2" text-anchor="end" fill="#333">6400</text><line x1="195" y1="235.20" x2="198" y2="235.20" stroke="#333" stroke-width="0.7"/><text x="192.3" y="238.10" font-size="9.2" text-anchor="end" fill="#333">6600</text><line x1="195" y1="189.20" x2="198" y2="189.20" stroke="#333" stroke-width="0.7"/><text x="192.3" y="192.10" font-size="9.2" text-anchor="end" fill="#333">6800</text><line x1="195" y1="143.20" x2="198" y2="143.20" stroke="#333" stroke-width="0.7"/><text x="192.3" y="146.10" font-size="9.2" text-anchor="end" fill="#333">7000</text><text x="357" y="416.8" font-size="9.3" text-anchor="middle" fill="#333">Raman Shift [<tspan font-style="italic">cm</tspan><tspan font-size="6.3" dy="-3.3">−1</tspan><tspan dy="3.3">]</tspan></text><text transform="translate(168.6,253.8) rotate(-90)" font-size="8.6" text-anchor="middle" fill="#444">Intensity</text></svg><div style="position:absolute;left:413px;top:117.5px;width:100px;text-align:right;font-size:7.3px;line-height:7.3px;color:#222;white-space:pre;-webkit-text-stroke:0">X:  24.5 um</div><div style="position:absolute;left:523px;top:116px;width:172px;height:306px;background:#ffffff"></div><div style="position:absolute;left:523px;top:422px;width:172px;height:24px;background:#f0f0f0"></div><div style="position:absolute;left:695px;top:116px;width:1px;height:331px;background:#d8d8d8"></div><svg style="position:absolute;left:0;top:0" width="697" height="450" viewBox="0 0 697 450"><rect x="564" y="124.4" width="126.7" height="272" fill="none" stroke="#3a3a3a" stroke-width="0.9"/><polyline points="569.9,204.4 571.2,204.4 572.3,213.3 573.9,214.9 575,216.2 576.1,216.7 577.2,254.4 578.3,247.8 579.9,234.4 581,242.2 582.3,237.8 583.9,240 585,250 586.1,244.4 587.2,258.9 588.3,263.3 589.4,256.7 591,271.1 592.8,247.8 594.6,233.3 595.7,260 597.2,258.9 598.8,265.6 600.6,278.9 602.1,283.3 603.2,273.3 605,281.3 607.1,289.3 609,288 610.3,289.3 611.7,282.7 613,286.7 614.3,301.3 615.7,302.7 617,310.7 618.3,309.3 619.1,310.7 620.5,294.7 621.5,308 622.5,344 624,344.8 625.6,362.7 626.7,354.9 627.8,371.2 629,358.8 630.2,373.5 631.5,364.2 632.6,368.1 634,382.9 635.5,353.3 636.8,361.9 637.9,375.9 639.1,351.8 640.2,333.1 641,321.3 642.9,312 645,320.7 646.3,322.7 647.7,319.3 648.7,314 650.1,308.7 651,316.7 652.3,308.7 653.7,307.1 654.6,308.7 656.3,302 657.7,297.3 659,305.3 660.3,305.3 661.3,299.3 662.3,302 663.7,303.3 665,314 666.1,302.7 667.3,301.3 668.6,306 669.7,304 671.3,295.3 672.6,298 673.7,304 675,301.3 676.1,302.7 677.3,310.7 678.3,311.3 679.9,136 681.7,303.3 683,312.7 684.7,319.3" fill="none" stroke="#1f77b4" stroke-width="1.25" stroke-linejoin="round"/><line x1="593.4" y1="396.4" x2="593.4" y2="399.4" stroke="#333" stroke-width="0.7"/><text x="593.4" y="408.3" font-size="9" text-anchor="middle" fill="#333">25</text><line x1="623.9" y1="396.4" x2="623.9" y2="399.4" stroke="#333" stroke-width="0.7"/><text x="623.9" y="408.3" font-size="9" text-anchor="middle" fill="#333">50</text><line x1="654.4" y1="396.4" x2="654.4" y2="399.4" stroke="#333" stroke-width="0.7"/><text x="654.4" y="408.3" font-size="9" text-anchor="middle" fill="#333">75</text><line x1="684.9" y1="396.4" x2="684.9" y2="399.4" stroke="#333" stroke-width="0.7"/><text x="684.9" y="408.3" font-size="9" text-anchor="middle" fill="#333">100</text><line x1="560.5" y1="130.00" x2="563.5" y2="130.00" stroke="#333" stroke-width="0.7"/><text x="558" y="133.30" font-size="9" text-anchor="end" fill="#333">1.470</text><line x1="560.5" y1="163.64" x2="563.5" y2="163.64" stroke="#333" stroke-width="0.7"/><text x="558" y="166.94" font-size="9" text-anchor="end" fill="#333">1.468</text><line x1="560.5" y1="197.28" x2="563.5" y2="197.28" stroke="#333" stroke-width="0.7"/><text x="558" y="200.58" font-size="9" text-anchor="end" fill="#333">1.466</text><line x1="560.5" y1="230.92" x2="563.5" y2="230.92" stroke="#333" stroke-width="0.7"/><text x="558" y="234.22" font-size="9" text-anchor="end" fill="#333">1.464</text><line x1="560.5" y1="264.56" x2="563.5" y2="264.56" stroke="#333" stroke-width="0.7"/><text x="558" y="267.86" font-size="9" text-anchor="end" fill="#333">1.462</text><line x1="560.5" y1="298.20" x2="563.5" y2="298.20" stroke="#333" stroke-width="0.7"/><text x="558" y="301.50" font-size="9" text-anchor="end" fill="#333">1.460</text><line x1="560.5" y1="331.84" x2="563.5" y2="331.84" stroke="#333" stroke-width="0.7"/><text x="558" y="335.14" font-size="9" text-anchor="end" fill="#333">1.458</text><line x1="560.5" y1="365.48" x2="563.5" y2="365.48" stroke="#333" stroke-width="0.7"/><text x="558" y="368.78" font-size="9" text-anchor="end" fill="#333">1.456</text><text x="565" y="121.5" font-size="9" fill="#333">1e6</text><text x="627" y="419.5" font-size="9" text-anchor="middle" fill="#333">X [um]</text><text transform="translate(530.5,260) rotate(-90)" font-size="9" text-anchor="middle" fill="#333">Integral (2521-3502)</text></svg><svg style="position:absolute;left:0;top:0" width="697" height="450" viewBox="0 0 697 450"><g transform="translate(162.7,431.8)"><path d="M0.2 4.8 L5.8 0.4 L11.4 4.8" fill="none" stroke="#111" stroke-width="1.2"/><rect x="8.4" y="0.3" width="1.5" height="3" fill="#111"/><path d="M1.8 5.6 L5.8 2.3 L9.8 5.6 L9.8 9.4 L7 9.4 L7 7 L4.6 7 L4.6 9.4 L1.8 9.4 Z" fill="#111"/></g><rect x="178.2" y="428.6" width="0.9" height="13.4" fill="#c4c4c4"/><path transform="translate(183.1,429.2)" d="M6.5 0 L9 3.1 L7.5 3.1 L7.5 5.7 L10 5.7 L10 4.2 L13.1 6.7 L10 9.2 L10 7.7 L7.5 7.7 L7.5 10.3 L9 10.3 L6.5 13.4 L4 10.3 L5.5 10.3 L5.5 7.7 L3 7.7 L3 9.2 L-0.1 6.7 L3 4.2 L3 5.7 L5.5 5.7 L5.5 3.1 L4 3.1 Z" fill="#111"/><g transform="translate(201.1,430.7)"><circle cx="4.9" cy="4.9" r="4" fill="none" stroke="#111" stroke-width="1.7"/><path d="M7.6 7.6 L11.3 10.9" stroke="#111" stroke-width="1.9" stroke-linecap="round"/></g><g transform="translate(217.8,430)" fill="#111"><rect x="0" y="1.5" width="11" height="1.1"/><rect x="0" y="5.2" width="11" height="1.1"/><rect x="0" y="9" width="11" height="1.1"/><circle cx="3.6" cy="2.05" r="1.35"/><circle cx="8.1" cy="5.75" r="1.35"/><circle cx="3.9" cy="9.55" r="1.35"/></g><rect x="233.6" y="428.6" width="0.9" height="13.4" fill="#c4c4c4"/><g transform="translate(238.6,430.2)"><path d="M0.7 0.7 L8.8 0.7 L10.6 2.5 L10.6 10.6 L0.7 10.6 Z" fill="none" stroke="#111" stroke-width="1.4" stroke-linejoin="round"/><rect x="2.2" y="0.7" width="5.6" height="3.6" fill="#111"/><rect x="5.3" y="1.2" width="1.3" height="2.4" fill="#fff"/><rect x="1.5" y="5.8" width="8.3" height="4.3" fill="#111"/><rect x="3" y="7.2" width="5.3" height="2.2" fill="#fff"/></g><g transform="translate(254.2,428.4)"><g stroke="#a8a8a8" stroke-width="1.6" stroke-dasharray="1.2 0.6"><path d="M0 1.3 H9.5"/><path d="M0 4.7 H9.5"/></g><path d="M5 7 L11 7 L12.4 8.4 L12.4 13.1 L5 13.1 Z" fill="#333"/><rect x="6.4" y="10.3" width="4.6" height="1.9" fill="#eee"/><rect x="7.1" y="7.4" width="3" height="1.7" fill="#eee"/></g><g transform="translate(271.2,428.4)"><path d="M0.75 6.8 L0.75 7.9 A5.25 5.25 0 0 0 11.25 7.9 L11.25 6.8" fill="none" stroke="#111" stroke-width="1.5"/><path d="M6 0.1 L10 5.1 L7.7 5.1 L7.7 9.3 L4.3 9.3 L4.3 5.1 L2 5.1 Z" fill="#111"/></g><g transform="translate(525.3,431.8)"><path d="M0.2 4.8 L5.8 0.4 L11.4 4.8" fill="none" stroke="#111" stroke-width="1.2"/><rect x="8.4" y="0.3" width="1.5" height="3" fill="#111"/><path d="M1.8 5.6 L5.8 2.3 L9.8 5.6 L9.8 9.4 L7 9.4 L7 7 L4.6 7 L4.6 9.4 L1.8 9.4 Z" fill="#111"/></g><rect x="541.7" y="428.6" width="0.9" height="13.4" fill="#c4c4c4"/><path transform="translate(547.1,429.2)" d="M6.5 0 L9 3.1 L7.5 3.1 L7.5 5.7 L10 5.7 L10 4.2 L13.1 6.7 L10 9.2 L10 7.7 L7.5 7.7 L7.5 10.3 L9 10.3 L6.5 13.4 L4 10.3 L5.5 10.3 L5.5 7.7 L3 7.7 L3 9.2 L-0.1 6.7 L3 4.2 L3 5.7 L5.5 5.7 L5.5 3.1 L4 3.1 Z" fill="#111"/><g transform="translate(564.5,430.7)"><circle cx="4.9" cy="4.9" r="4" fill="none" stroke="#111" stroke-width="1.7"/><path d="M7.6 7.6 L11.3 10.9" stroke="#111" stroke-width="1.9" stroke-linecap="round"/></g><g transform="translate(582.2,430)"><path d="M0.1 5.4 H11.5" stroke="#111" stroke-width="1.3"/><path d="M5.7 0.1 L6.7 2.5 L6.4 8.5 L6.7 8.5 L5.7 10.8 L4.7 8.5 L5 2.5 L4.7 2.5 Z" fill="#111"/><circle cx="5.7" cy="5.4" r="2.3" fill="none" stroke="#111" stroke-width="1.2"/></g><rect x="599.7" y="428.6" width="0.9" height="13.4" fill="#c4c4c4"/><g transform="translate(604.5,430.2)"><path d="M0.7 0.7 L8.8 0.7 L10.6 2.5 L10.6 10.6 L0.7 10.6 Z" fill="none" stroke="#111" stroke-width="1.4" stroke-linejoin="round"/><rect x="2.2" y="0.7" width="5.6" height="3.6" fill="#111"/><rect x="5.3" y="1.2" width="1.3" height="2.4" fill="#fff"/><rect x="1.5" y="5.8" width="8.3" height="4.3" fill="#111"/><rect x="3" y="7.2" width="5.3" height="2.2" fill="#fff"/></g><g transform="translate(620,428.4)"><g stroke="#a8a8a8" stroke-width="1.6" stroke-dasharray="1.2 0.6"><path d="M0 1.3 H9.5"/><path d="M0 4.7 H9.5"/></g><path d="M5 7 L11 7 L12.4 8.4 L12.4 13.1 L5 13.1 Z" fill="#333"/><rect x="6.4" y="10.3" width="4.6" height="1.9" fill="#eee"/><rect x="7.1" y="7.4" width="3" height="1.7" fill="#eee"/></g><g transform="translate(637.2,428.4)"><path d="M0.75 6.8 L0.75 7.9 A5.25 5.25 0 0 0 11.25 7.9 L11.25 6.8" fill="none" stroke="#111" stroke-width="1.5"/><path d="M6 0.1 L10 5.1 L7.7 5.1 L7.7 9.3 L4.3 9.3 L4.3 5.1 L2 5.1 Z" fill="#111"/></g></svg><div style="position:absolute;left:696px;top:0px;width:1px;height:450px;background:#8a8a8a"></div><div style="position:absolute;left:0px;top:46px;width:401px;height:69px;border:2px solid #1fcf4a;box-sizing:border-box"></div><div style="position:absolute;left:4.5px;top:99px;font-size:12px;line-height:12px;color:#1fcb4e;white-space:pre;">Settings</div><div style="position:absolute;left:1px;top:116px;width:157px;height:334px;border:2px solid #1ea4f2;box-sizing:border-box"></div><div style="position:absolute;left:4px;top:123.2px;font-size:12px;line-height:12px;color:#2ba8f0;white-space:pre;">Fit Coefficients</div><div style="position:absolute;left:161px;top:116px;width:358px;height:332px;border:2px solid #e3202c;box-sizing:border-box"></div><div style="position:absolute;left:166px;top:120px;font-size:11.6px;line-height:11.6px;color:#e8333d;white-space:pre;">Fit Result</div><div style="position:absolute;left:521px;top:114px;width:180px;height:334px;border:2px solid #fa8a32;box-sizing:border-box"></div><div style="position:absolute;left:524.5px;top:119.6px;font-size:11.6px;line-height:11.6px;color:#f5862c;white-space:pre;">Trace Selection</div><div style="position:absolute;left:158px;top:449px;width:539px;height:1px;background:#7a7a7a"></div>
</body></html>
